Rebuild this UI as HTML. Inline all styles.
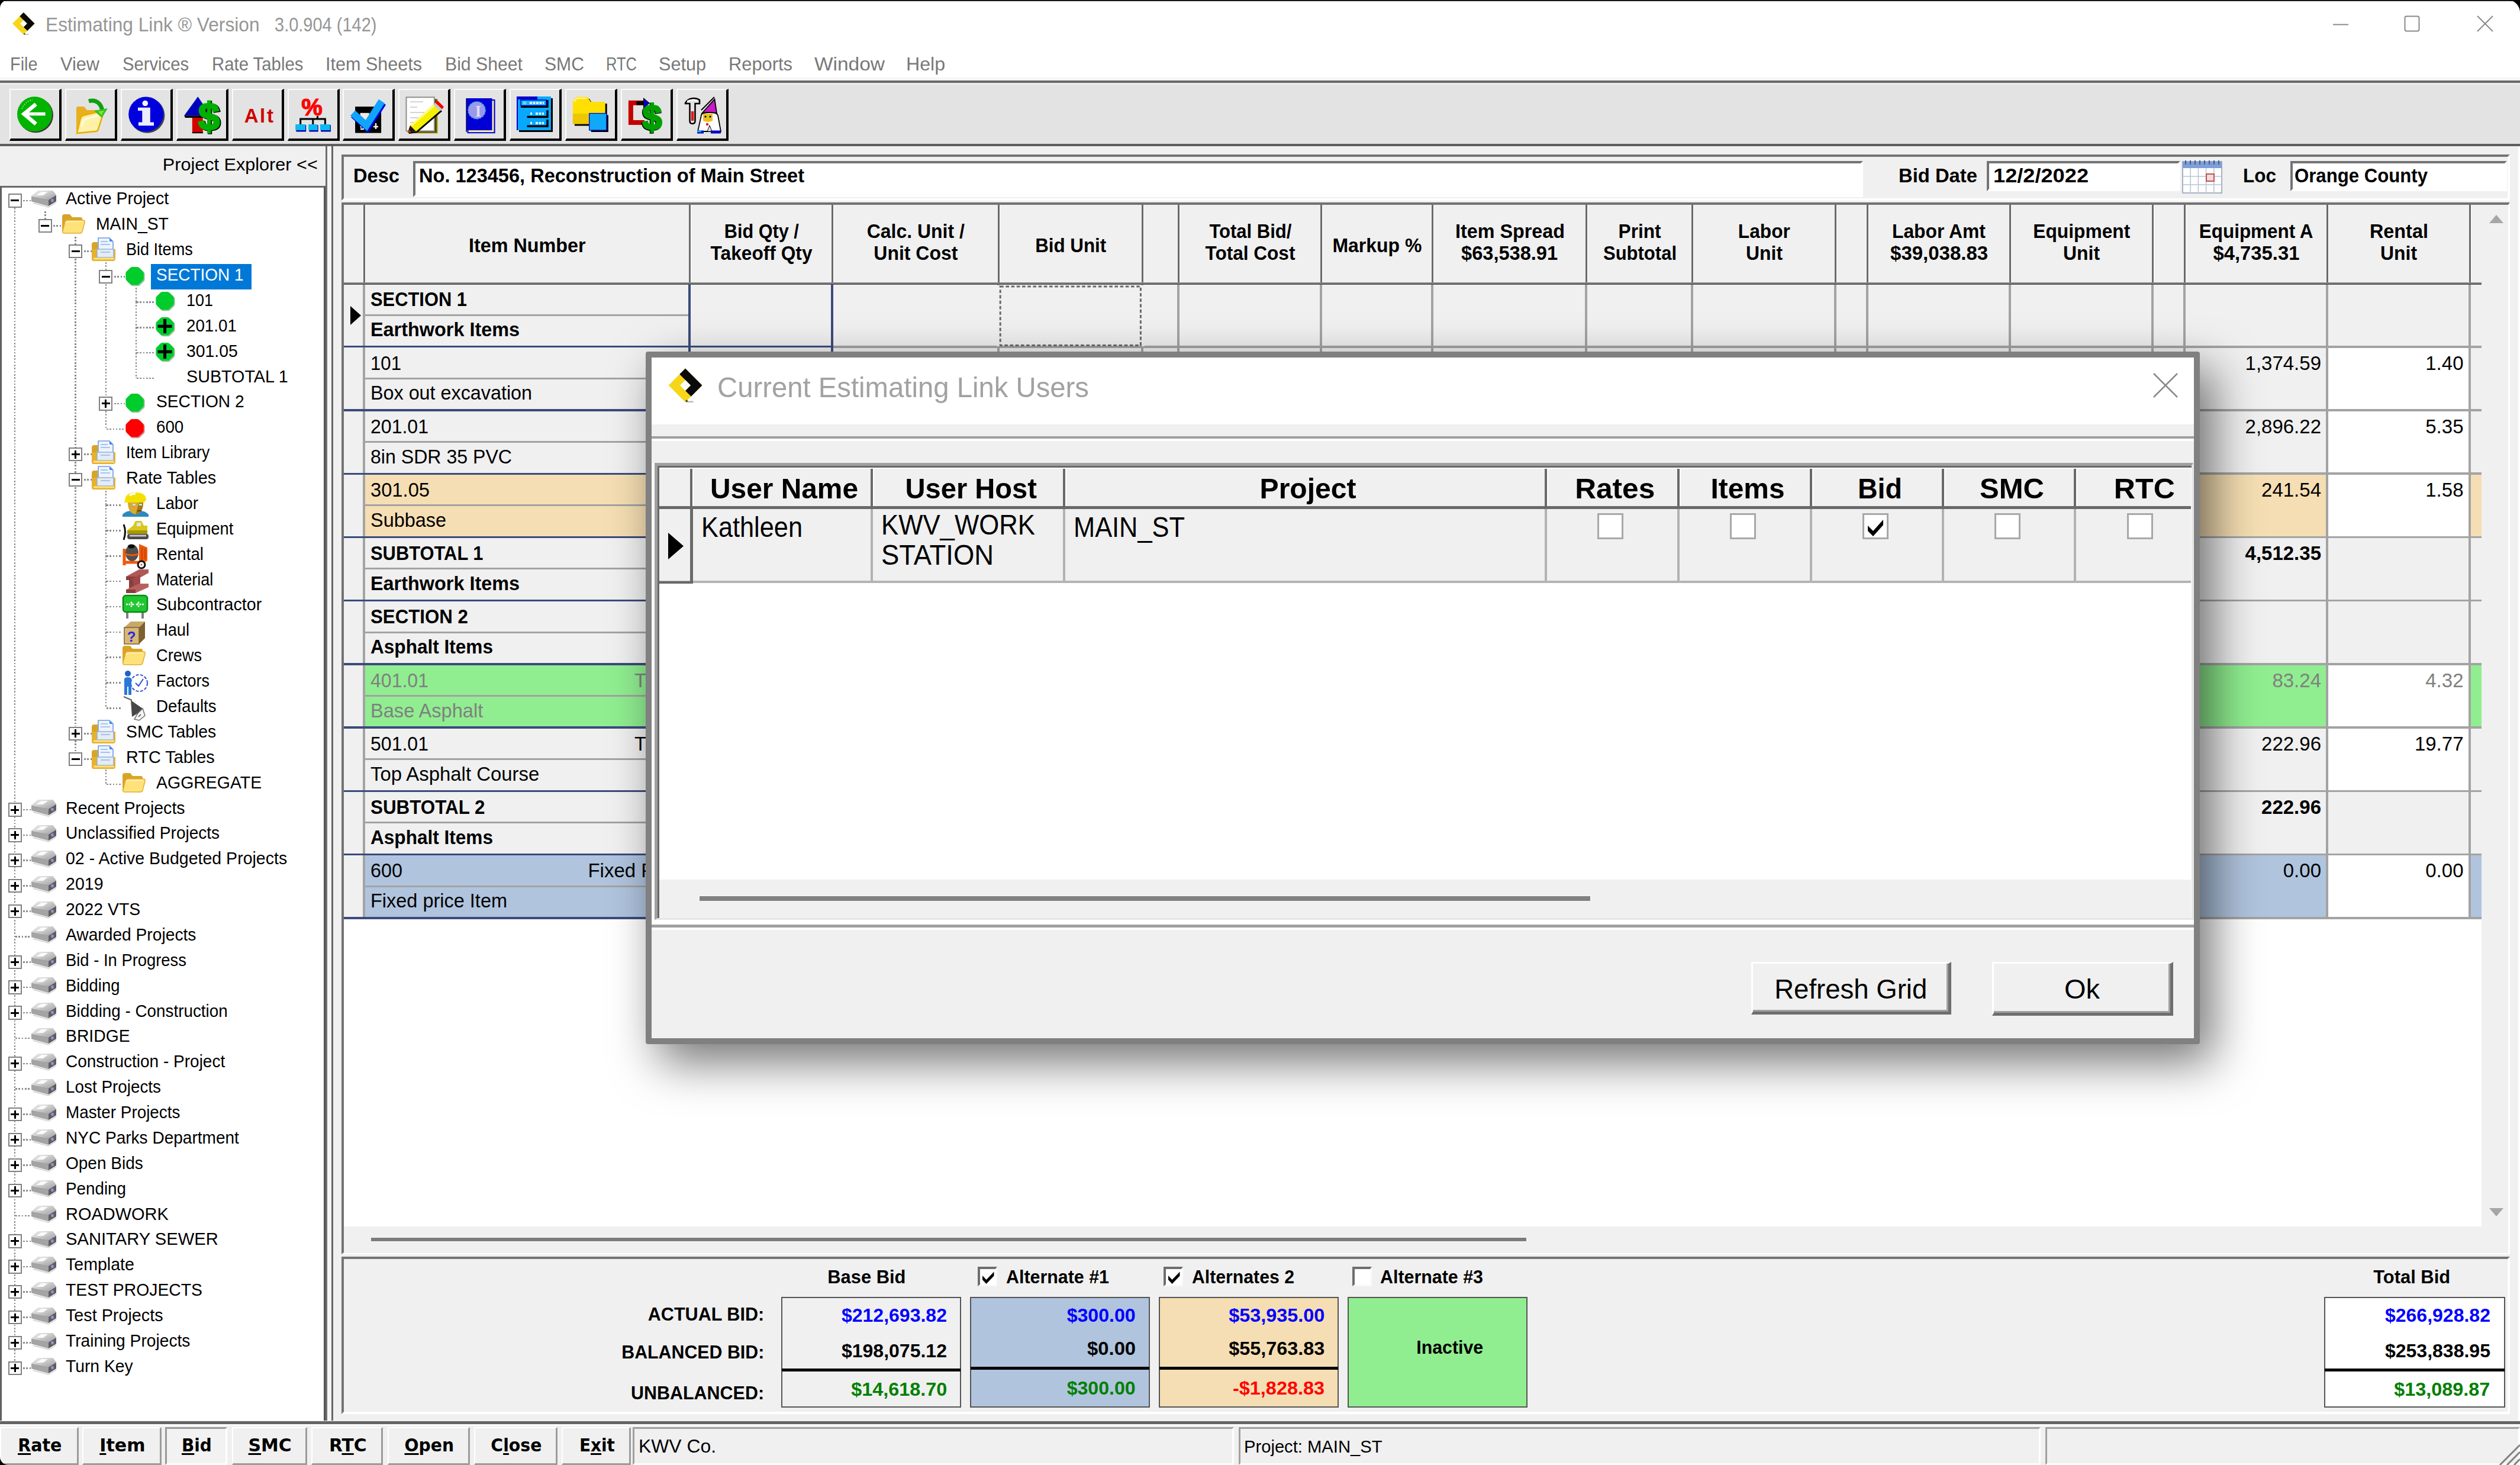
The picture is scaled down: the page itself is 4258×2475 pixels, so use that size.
<!DOCTYPE html>
<html lang="en"><head><meta charset="utf-8"><title>Estimating Link</title>
<style>
html,body{margin:0;padding:0;}
body{width:4258px;height:2475px;position:relative;overflow:hidden;background:#f0f0f0;font-family:'Liberation Sans', sans-serif;}
body div{position:absolute;box-sizing:border-box;}
svg{position:absolute;overflow:visible;}
</style></head><body>
<svg width="0" height="0" style="left:0;top:0"><defs><linearGradient id="dg" x1="0" y1="0" x2="1" y2="1"><stop offset="0" stop-color="#f4f4f4"/><stop offset="1" stop-color="#9c9c9c"/></linearGradient></defs></svg>
<div style="left:0px;top:0px;width:4258px;height:137px;background:#fff;"></div>
<svg style="left:20.4px;top:19.7px" width="39.6" height="39.6" viewBox="0 0 40 40" ><path d="M1.05 20.00L20.00 1.05L38.95 20.00L20.00 38.95Z" fill="#f7d61a"/><path d="M20.00 1.05L38.95 20.00L26.51 32.45L20.00 25.94L25.94 20.00L13.49 7.55Z" fill="#0a0a0a"/><path d="M14.06 20.00L20.00 14.06L25.94 20.00L20.00 25.94Z" fill="#fff"/><path d="M21 38.5H29" stroke="#b8b8b8" stroke-width="1.6"/><circle cx="21.5" cy="37.6" r="1.2" fill="#444"/></svg>
<div style="top:25.99px;font-size:32.5px;line-height:32.5px;height:32.5px;color:#969696;white-space:pre;left:77.00px;transform:scaleX(0.9750);transform-origin:0 0;">Estimating Link ® Version</div>
<div style="top:25.99px;font-size:32.5px;line-height:32.5px;height:32.5px;color:#969696;white-space:pre;left:463.60px;transform:scaleX(0.8922);transform-origin:0 0;">3.0.904 (142)</div>
<svg style="left:3930px;top:15px" width="300" height="50" viewBox="0 0 300 50" fill="none" stroke="#8a8a8a" stroke-width="2"><path d="M12 26.5H38"/><rect x="133.5" y="12.5" width="24" height="25" rx="3"/><path d="M256 12L282 38M282 12L256 38"/></svg>
<div style="top:93.34px;font-size:31.5px;line-height:31.5px;height:31.5px;color:#787878;white-space:pre;left:17.00px;transform:scaleX(0.9161);transform-origin:0 0;">File</div>
<div style="top:93.34px;font-size:31.5px;line-height:31.5px;height:31.5px;color:#787878;white-space:pre;left:102.00px;transform:scaleX(0.9748);transform-origin:0 0;">View</div>
<div style="top:93.34px;font-size:31.5px;line-height:31.5px;height:31.5px;color:#787878;white-space:pre;left:207.00px;transform:scaleX(0.9273);transform-origin:0 0;">Services</div>
<div style="top:93.34px;font-size:31.5px;line-height:31.5px;height:31.5px;color:#787878;white-space:pre;left:357.50px;transform:scaleX(0.9318);transform-origin:0 0;">Rate Tables</div>
<div style="top:93.34px;font-size:31.5px;line-height:31.5px;height:31.5px;color:#787878;white-space:pre;left:550.00px;transform:scaleX(0.9698);transform-origin:0 0;">Item Sheets</div>
<div style="top:93.34px;font-size:31.5px;line-height:31.5px;height:31.5px;color:#787878;white-space:pre;left:752.00px;transform:scaleX(0.9590);transform-origin:0 0;">Bid Sheet</div>
<div style="top:93.34px;font-size:31.5px;line-height:31.5px;height:31.5px;color:#787878;white-space:pre;left:920.00px;transform:scaleX(0.9572);transform-origin:0 0;">SMC</div>
<div style="top:93.34px;font-size:31.5px;line-height:31.5px;height:31.5px;color:#787878;white-space:pre;left:1024.00px;transform:scaleX(0.8104);transform-origin:0 0;">RTC</div>
<div style="top:93.34px;font-size:31.5px;line-height:31.5px;height:31.5px;color:#787878;white-space:pre;left:1113.00px;transform:scaleX(0.9718);transform-origin:0 0;">Setup</div>
<div style="top:93.34px;font-size:31.5px;line-height:31.5px;height:31.5px;color:#787878;white-space:pre;left:1231.00px;transform:scaleX(0.9792);transform-origin:0 0;">Reports</div>
<div style="top:93.34px;font-size:31.5px;line-height:31.5px;height:31.5px;color:#787878;white-space:pre;left:1376.00px;transform:scaleX(1.0622);transform-origin:0 0;">Window</div>
<div style="top:93.34px;font-size:31.5px;line-height:31.5px;height:31.5px;color:#787878;white-space:pre;left:1531.00px;transform:scaleX(1.0188);transform-origin:0 0;">Help</div>
<div style="left:0px;top:131px;width:4258px;height:5.5px;background:#f5f5f5;"></div>
<div style="left:0px;top:136.3px;width:4258px;height:3.9px;background:#686868;"></div>
<div style="left:0px;top:140.2px;width:4258px;height:103px;background:#e3e3e3;"></div>
<div style="left:0px;top:140.2px;width:4258px;height:2.5px;background:#ececec;"></div>
<div style="left:0px;top:243px;width:4258px;height:4px;background:#5e5e5e;"></div>
<div style="left:16.3px;top:150px;width:88px;height:88px;background:#e3e3e3;border-top:2px solid #fbfbfb;border-left:2px solid #fbfbfb;border-right:4px solid #000;border-bottom:4px solid #000;"></div>
<svg style="left:28.3px;top:162px" width="64" height="64" viewBox="0 0 64 64" ><circle cx="32.3" cy="32.6" r="29.7" fill="#000" opacity=".75"/><circle cx="30.5" cy="30.8" r="29.5" fill="#00b400"/><path d="M9 22A24 24 0 0 1 27 6.5" stroke="#7ee07e" stroke-width="2" fill="none" stroke-dasharray="2 2"/><path d="M32.7 14L12.6 30.6L32.7 47.4" stroke="#fff" stroke-width="6.5" fill="none"/><path d="M13 30.6H48.6" stroke="#fff" stroke-width="5.5"/></svg>
<div style="left:110.15px;top:150px;width:88px;height:88px;background:#e3e3e3;border-top:2px solid #fbfbfb;border-left:2px solid #fbfbfb;border-right:4px solid #000;border-bottom:4px solid #000;"></div>
<svg style="left:122.15px;top:162px" width="64" height="64" viewBox="0 0 64 64" ><path d="M7 21Q7 18 10 18H20L25 24H44V60H7Z" fill="#e8b020"/><path d="M8 63L14 38Q15 34 19 33L48 26Q54 25 52 31L44 56Q43 60 39 60Z" fill="#fff2a8" stroke="#e6b000" stroke-width="2.5"/><path d="M16 52L20 40L44 33" stroke="#fffbe0" stroke-width="3" fill="none"/><path d="M28 9C40 5 50 13 51 27" stroke="#10a010" stroke-width="7" fill="none"/><path d="M37 25L60 21L50 37Z" fill="#30c030"/><path d="M44 26L54 25L49 33Z" fill="#90e020"/></svg>
<div style="left:204px;top:150px;width:88px;height:88px;background:#e3e3e3;border-top:2px solid #fbfbfb;border-left:2px solid #fbfbfb;border-right:4px solid #000;border-bottom:4px solid #000;"></div>
<svg style="left:216px;top:162px" width="64" height="64" viewBox="0 0 64 64" ><circle cx="32.7" cy="33" r="29.7" fill="#000" opacity=".7"/><circle cx="30.7" cy="31" r="29.5" fill="#0000dc"/><circle cx="29.3" cy="12.5" r="4.8" fill="#f4f4ff"/><path d="M17 19.8H37.8V44.6H44V50.2H18V44.6H24.3V25H17Z" fill="#ececff"/></svg>
<div style="left:297.85px;top:150px;width:88px;height:88px;background:#e3e3e3;border-top:2px solid #fbfbfb;border-left:2px solid #fbfbfb;border-right:4px solid #000;border-bottom:4px solid #000;"></div>
<svg style="left:309.85px;top:162px" width="64" height="64" viewBox="0 0 64 64" ><path d="M24.4 1.2L46 33.3H1.2Z" fill="#0000c0"/><path d="M1.2 33.3H46V36.9H3Z" fill="#000"/><rect x="14.8" y="36.9" width="18" height="25.3" fill="#d40000"/><path d="M14.8 62.2H33" stroke="#000" stroke-width="2"/><text x="25" y="56.7" font-family="Liberation Sans, sans-serif" font-weight="bold" font-size="65" fill="#000" stroke="#000" stroke-width="3.5" transform="translate(1.5,1.5)">$</text><text x="25" y="56.7" font-family="Liberation Sans, sans-serif" font-weight="bold" font-size="65" fill="#00b000" stroke="#00b000" stroke-width="3">$</text></svg>
<div style="left:391.7px;top:150px;width:88px;height:88px;background:#e3e3e3;border-top:2px solid #fbfbfb;border-left:2px solid #fbfbfb;border-right:4px solid #000;border-bottom:4px solid #000;"></div>
<svg style="left:403.7px;top:162px" width="64" height="64" viewBox="0 0 64 64" ><text x="33.3" y="44.6" text-anchor="middle" font-family="Liberation Sans, sans-serif" font-weight="bold" font-size="33" letter-spacing="2.6" fill="#d00000" transform="translate(1.3,0)">Alt</text></svg>
<div style="left:485.55px;top:150px;width:88px;height:88px;background:#e3e3e3;border-top:2px solid #fbfbfb;border-left:2px solid #fbfbfb;border-right:4px solid #000;border-bottom:4px solid #000;"></div>
<svg style="left:497.55px;top:162px" width="64" height="64" viewBox="0 0 64 64" ><text x="29" y="32.5" text-anchor="middle" font-family="Liberation Sans, sans-serif" font-weight="bold" font-size="40" fill="#ff0000" stroke="#ff0000" stroke-width="1.2">%</text><path d="M38.5 34V39M9.7 49V39H51.4V49M30.8 39V49" stroke="#000" stroke-width="3" fill="none"/><rect x="2.4" y="49.2" width="16.8" height="11.3" fill="#0000b0"/><rect x="24.4" y="49.2" width="15.3" height="11.3" fill="#0000b0"/><rect x="44.1" y="49.2" width="16.9" height="11.3" fill="#0000b0"/><rect x="1.2" y="48" width="16.8" height="10" fill="#10b8f0"/><rect x="23.2" y="48" width="15.3" height="10" fill="#10b8f0"/><rect x="42.9" y="48" width="16.9" height="10" fill="#10b8f0"/></svg>
<div style="left:579.4px;top:150px;width:88px;height:88px;background:#e3e3e3;border-top:2px solid #fbfbfb;border-left:2px solid #fbfbfb;border-right:4px solid #000;border-bottom:4px solid #000;"></div>
<svg style="left:591.4px;top:162px" width="64" height="64" viewBox="0 0 64 64" ><rect x="9.1" y="18.1" width="44" height="44.5" fill="#000"/><rect x="17.6" y="28.8" width="15.2" height="24.8" fill="#f0e8e0"/><path d="M5 29L28 50L54 9" stroke="#0000e0" stroke-width="13" fill="none" transform="translate(1.5,2.5)"/><path d="M44 46V56M40 52H48" stroke="#f0f0f0" stroke-width="2.5"/><path d="M18 56H24" stroke="#f0f0f0" stroke-width="2.5"/><path d="M5 29L28 50L54 9" stroke="#10a4ff" stroke-width="12" fill="none"/></svg>
<div style="left:673.25px;top:150px;width:88px;height:88px;background:#e3e3e3;border-top:2px solid #fbfbfb;border-left:2px solid #fbfbfb;border-right:4px solid #000;border-bottom:4px solid #000;"></div>
<svg style="left:685.25px;top:162px" width="64" height="64" viewBox="0 0 64 64" ><rect x="4.5" y="5.3" width="50" height="58" fill="#a09000"/><rect x="4.5" y="5.3" width="48" height="56.5" fill="#000" opacity=".55"/><rect x="1.5" y="2.3" width="47.4" height="57" fill="#fff" stroke="#909090" stroke-width="2"/><path d="M8 10H30M8 19H20M8 28H32M8 37H26M8 45H22" stroke="#d4d4d4" stroke-width="2"/><path d="M3.8 62L8 50L49 13L60 24L18 60Z" fill="#000" transform="translate(2,2)"/><path d="M3.8 62L8 50L49 13L60 24L18 60Z" fill="#f4f000"/><path d="M10 50L50 15" stroke="#fffc80" stroke-width="3"/><path d="M47 15L50.5 11.5L62 22.5L58 26Z" fill="#c8c8c8"/><path d="M50.5 11.5L54 7.5L65 18.5L62 22.5Z" fill="#f00000"/><path d="M3.8 62L8 50L18 60Z" fill="#181818"/><path d="M3.8 62L6 57L10 61Z" fill="#e02020"/></svg>
<div style="left:767.1px;top:150px;width:88px;height:88px;background:#e3e3e3;border-top:2px solid #fbfbfb;border-left:2px solid #fbfbfb;border-right:4px solid #000;border-bottom:4px solid #000;"></div>
<svg style="left:779.1px;top:162px" width="64" height="64" viewBox="0 0 64 64" ><rect x="10.5" y="6" width="47.1" height="57.2" fill="#0000d0"/><rect x="12.5" y="8" width="43" height="53.2" fill="#fbeeb0"/><rect x="9.1" y="4" width="43.4" height="54.1" fill="#0000d4"/><path d="M9.1 4V61" stroke="#000060" stroke-width="1.5"/><circle cx="26.6" cy="24.3" r="14.6" fill="#9c98e8"/><circle cx="26.6" cy="24.3" r="14.6" fill="none" stroke="#20a0f0" stroke-width="1.5" stroke-dasharray="3 2"/><text x="29" y="35" text-anchor="middle" font-family="Liberation Serif, serif" font-weight="bold" font-size="27" fill="#dcdcfc">I</text></svg>
<div style="left:860.95px;top:150px;width:88px;height:88px;background:#e3e3e3;border-top:2px solid #fbfbfb;border-left:2px solid #fbfbfb;border-right:4px solid #000;border-bottom:4px solid #000;"></div>
<svg style="left:872.95px;top:162px" width="64" height="64" viewBox="0 0 64 64" ><rect x="4" y="4" width="57" height="57" fill="#000"/><rect x="1" y="1" width="57" height="57" fill="#08a8ff"/><rect x="1" y="1" width="34" height="5" fill="#0000d0"/><path d="M1 1V58" stroke="#0000d0" stroke-width="2"/><path d="M7 18.2H52V7" stroke="#000" stroke-width="3.5" fill="none"/><rect x="7" y="7" width="43" height="9.5" fill="#18b4ff" stroke="#0000b8" stroke-width="1.5"/><path d="M17.5 35.5H52V24.2M17.5 51.2H52V40" stroke="#000" stroke-width="3.5" fill="none"/><rect x="11" y="9.5" width="5" height="5" fill="#60e0e0"/><path d="M22 12H46" stroke="#d0f4ff" stroke-width="4" stroke-dasharray="4 1.5"/><path d="M23 30H26M32 30H46M23 46H26M32 46H46" stroke="#d0f4ff" stroke-width="4" stroke-dasharray="4 1.5"/></svg>
<div style="left:954.8px;top:150px;width:88px;height:88px;background:#e3e3e3;border-top:2px solid #fbfbfb;border-left:2px solid #fbfbfb;border-right:4px solid #000;border-bottom:4px solid #000;"></div>
<svg style="left:966.8px;top:162px" width="64" height="64" viewBox="0 0 64 64" ><path d="M3.9 12L9.9 4.7H28.7L34 13H58.7V50.5H3.9Z" fill="#000"/><path d="M0.9 9L6.9 1.7H25.7L31 10H55.7V47.5H0.9Z" fill="#ffe000"/><path d="M0.9 30H55.7V47.5H0.9Z" fill="#e0b800" opacity=".6"/><path d="M3 10L7.5 4H24" stroke="#fff8a0" stroke-width="2" fill="none"/><rect x="31.7" y="32.5" width="29.2" height="28.5" fill="#000"/><rect x="28.7" y="29.5" width="29.2" height="28.5" fill="#10a8f8"/><rect x="28.7" y="29.5" width="29.2" height="28.5" fill="none" stroke="#0000c0" stroke-width="1.2"/></svg>
<div style="left:1048.65px;top:150px;width:88px;height:88px;background:#e3e3e3;border-top:2px solid #fbfbfb;border-left:2px solid #fbfbfb;border-right:4px solid #000;border-bottom:4px solid #000;"></div>
<svg style="left:1060.65px;top:162px" width="64" height="64" viewBox="0 0 64 64" ><path d="M27.9 11.7H4.9V45H27.9" stroke="#c40000" stroke-width="8" fill="none"/><path d="M14.4 9H26V3L37 12.2L26 21.5V15.5H14.4Z" fill="#000"/><path d="M27 5.5L36.5 12.2L27 19Z" fill="#0000c8"/><text x="24.5" y="57.3" font-family="Liberation Sans, sans-serif" font-weight="bold" font-size="59" fill="#000" stroke="#000" stroke-width="3.5" transform="translate(-1,1.2)">$</text><text x="24.5" y="57.3" font-family="Liberation Sans, sans-serif" font-weight="bold" font-size="59" fill="#00a000" stroke="#00a000" stroke-width="3">$</text></svg>
<div style="left:1142.5px;top:150px;width:88px;height:88px;background:#e3e3e3;border-top:2px solid #fbfbfb;border-left:2px solid #fbfbfb;border-right:4px solid #000;border-bottom:4px solid #000;"></div>
<svg style="left:1154.5px;top:162px" width="64" height="64" viewBox="0 0 64 64" ><path d="M3 12C8 3 20 2 27 7V13H19.5V42Q19.5 47 15 47Q10.5 47 10.5 42V13H3Z" fill="#e4e4e4" stroke="#000" stroke-width="2.5"/><rect x="12.8" y="26" width="4.6" height="16" fill="#e01818"/><path d="M6 9Q14 5 24 8" stroke="#fff" stroke-width="2" fill="none"/><path d="M31.5 29L52.5 5.5L56 29Z" fill="#c818c8" stroke="#000" stroke-width="1.8"/><path d="M30 24L52 2" stroke="#000" stroke-width="2"/><path d="M30 33Q30 28 44 28Q57 28 58 33L63 60H24Z" fill="#fff" stroke="#000" stroke-width="1.8"/><path d="M33 30H49V42Q41 46 33 42Z" fill="#e8c020"/><circle cx="37" cy="35" r="1.6" fill="#000"/><circle cx="45" cy="35" r="1.6" fill="#000"/><circle cx="40" cy="48" r="2.2" fill="#f01010"/><path d="M40 60L44 50L48 60Z" fill="#e4e4e4" stroke="#000" stroke-width="1"/><path d="M23 61H34M46 61H63" stroke="#0000c8" stroke-width="5"/><path d="M23 60H30" stroke="#10a8f0" stroke-width="3"/></svg>
<div style="left:0px;top:247px;width:553px;height:2155px;background:#f0f0f0;"></div>
<div style="top:262.61px;font-size:30px;line-height:30px;height:30px;color:#000;white-space:pre;right:3721.00px;transform:scaleX(1.0203);transform-origin:100% 0;">Project Explorer &lt;&lt;</div>
<div style="left:0px;top:313.5px;width:549.8px;height:2088.5px;background:#fff;border-top:3.2px solid #6a6a6a;border-left:3px solid #606060;border-right:3.1px solid #555;"></div>
<div style="left:549.6px;top:247px;width:3px;height:2155px;background:#6e6e6e;"></div>
<div style="left:552.6px;top:247px;width:7.2px;height:2155px;background:#f5f5f5;"></div>
<div style="left:559.8px;top:247px;width:3698.2px;height:2155px;background:#f0f0f0;border-left:3.5px solid #666;border-right:3px solid #fff;"></div>
<div style="left:577px;top:261px;width:3664px;height:78px;border-top:4px solid #747474;border-left:4px solid #747474;border-bottom:4px solid #ffffff;border-right:4px solid #ffffff;"></div>
<div style="top:280.37px;font-size:33px;line-height:33px;height:33px;color:#000;white-space:pre;font-weight:bold;left:597.00px;transform:scaleX(0.9887);transform-origin:0 0;">Desc</div>
<div style="left:698px;top:272px;width:2450px;height:61px;background:#fff;border-top:4px solid #747474;border-left:4px solid #747474;border-bottom:4px solid #ffffff;border-right:4px solid #ffffff;"></div>
<div style="top:280.37px;font-size:33px;line-height:33px;height:33px;color:#000;white-space:pre;font-weight:bold;left:707.50px;transform:scaleX(0.9861);transform-origin:0 0;">No. 123456, Reconstruction of Main Street</div>
<div style="top:279.87px;font-size:33px;line-height:33px;height:33px;color:#000;white-space:pre;font-weight:bold;left:3208.30px;transform:scaleX(0.9936);transform-origin:0 0;">Bid Date</div>
<div style="left:3357px;top:271.5px;width:327px;height:51px;background:#fff;border-top:4px solid #747474;border-left:4px solid #747474;border-bottom:4px solid #ffffff;border-right:4px solid #ffffff;"></div>
<div style="top:279.57px;font-size:33px;line-height:33px;height:33px;color:#000;white-space:pre;font-weight:bold;left:3368.00px;transform:scaleX(1.0967);transform-origin:0 0;">12/2/2022</div>
<svg style="left:3687px;top:270px" width="68" height="57" viewBox="0 0 68 57" ><rect x="1" y="3" width="66" height="53" fill="#fff" stroke="#8c9bb5" stroke-width="1.5"/><rect x="1" y="3" width="66" height="11" fill="#7f9fd9"/><path d="M6 1v7" stroke="#445a8a" stroke-width="2"/><path d="M14 1v7" stroke="#445a8a" stroke-width="2"/><path d="M22 1v7" stroke="#445a8a" stroke-width="2"/><path d="M30 1v7" stroke="#445a8a" stroke-width="2"/><path d="M38 1v7" stroke="#445a8a" stroke-width="2"/><path d="M46 1v7" stroke="#445a8a" stroke-width="2"/><path d="M54 1v7" stroke="#445a8a" stroke-width="2"/><path d="M62 1v7" stroke="#445a8a" stroke-width="2"/><path d="M14.2 14V56" stroke="#b7c3d6" stroke-width="1.5"/><path d="M27.4 14V56" stroke="#b7c3d6" stroke-width="1.5"/><path d="M40.6 14V56" stroke="#b7c3d6" stroke-width="1.5"/><path d="M53.8 14V56" stroke="#b7c3d6" stroke-width="1.5"/><path d="M1 28H67" stroke="#b7c3d6" stroke-width="1.5"/><path d="M1 42H67" stroke="#b7c3d6" stroke-width="1.5"/><rect x="41" y="24" width="13" height="12" fill="#f6dada" stroke="#b55" stroke-width="2"/></svg>
<div style="top:280.37px;font-size:33px;line-height:33px;height:33px;color:#000;white-space:pre;font-weight:bold;left:3790.00px;transform:scaleX(0.9545);transform-origin:0 0;">Loc</div>
<div style="left:3870px;top:271.5px;width:366px;height:51px;background:#fff;border-top:4px solid #747474;border-left:4px solid #747474;border-bottom:4px solid #ffffff;border-right:4px solid #ffffff;"></div>
<div style="top:279.57px;font-size:33px;line-height:33px;height:33px;color:#000;white-space:pre;font-weight:bold;left:3877.00px;transform:scaleX(0.9440);transform-origin:0 0;">Orange County</div>
<div style="left:23.9px;top:350.9px;width:2.6px;height:1960.48px;background:repeating-linear-gradient(to bottom,#8c8c8c 0,#8c8c8c 2.6px,transparent 2.6px,transparent 5.3px);"></div>
<div style="left:75.1px;top:356.9px;width:2.6px;height:12.88px;background:repeating-linear-gradient(to bottom,#8c8c8c 0,#8c8c8c 2.6px,transparent 2.6px,transparent 5.3px);"></div>
<div style="left:126.3px;top:399.78px;width:2.6px;height:12.88px;background:repeating-linear-gradient(to bottom,#8c8c8c 0,#8c8c8c 2.6px,transparent 2.6px,transparent 5.3px);"></div>
<div style="left:177.5px;top:442.66px;width:2.6px;height:12.88px;background:repeating-linear-gradient(to bottom,#8c8c8c 0,#8c8c8c 2.6px,transparent 2.6px,transparent 5.3px);"></div>
<div style="left:228.7px;top:485.54px;width:2.6px;height:24.88px;background:repeating-linear-gradient(to bottom,#8c8c8c 0,#8c8c8c 2.6px,transparent 2.6px,transparent 5.3px);"></div>
<div style="left:228.7px;top:510.42px;width:2.6px;height:42.88px;background:repeating-linear-gradient(to bottom,#8c8c8c 0,#8c8c8c 2.6px,transparent 2.6px,transparent 5.3px);"></div>
<div style="left:228.7px;top:553.3px;width:2.6px;height:42.88px;background:repeating-linear-gradient(to bottom,#8c8c8c 0,#8c8c8c 2.6px,transparent 2.6px,transparent 5.3px);"></div>
<div style="left:228.7px;top:596.18px;width:2.6px;height:42.88px;background:repeating-linear-gradient(to bottom,#8c8c8c 0,#8c8c8c 2.6px,transparent 2.6px,transparent 5.3px);"></div>
<div style="left:177.5px;top:479.54px;width:2.6px;height:190.4px;background:repeating-linear-gradient(to bottom,#8c8c8c 0,#8c8c8c 2.6px,transparent 2.6px,transparent 5.3px);"></div>
<div style="left:177.5px;top:693.94px;width:2.6px;height:30.88px;background:repeating-linear-gradient(to bottom,#8c8c8c 0,#8c8c8c 2.6px,transparent 2.6px,transparent 5.3px);"></div>
<div style="left:126.3px;top:436.66px;width:2.6px;height:319.04px;background:repeating-linear-gradient(to bottom,#8c8c8c 0,#8c8c8c 2.6px,transparent 2.6px,transparent 5.3px);"></div>
<div style="left:126.3px;top:779.7px;width:2.6px;height:18.88px;background:repeating-linear-gradient(to bottom,#8c8c8c 0,#8c8c8c 2.6px,transparent 2.6px,transparent 5.3px);"></div>
<div style="left:177.5px;top:828.58px;width:2.6px;height:24.88px;background:repeating-linear-gradient(to bottom,#8c8c8c 0,#8c8c8c 2.6px,transparent 2.6px,transparent 5.3px);"></div>
<div style="left:177.5px;top:853.46px;width:2.6px;height:42.88px;background:repeating-linear-gradient(to bottom,#8c8c8c 0,#8c8c8c 2.6px,transparent 2.6px,transparent 5.3px);"></div>
<div style="left:177.5px;top:896.34px;width:2.6px;height:42.88px;background:repeating-linear-gradient(to bottom,#8c8c8c 0,#8c8c8c 2.6px,transparent 2.6px,transparent 5.3px);"></div>
<div style="left:177.5px;top:939.22px;width:2.6px;height:42.88px;background:repeating-linear-gradient(to bottom,#8c8c8c 0,#8c8c8c 2.6px,transparent 2.6px,transparent 5.3px);"></div>
<div style="left:177.5px;top:982.1px;width:2.6px;height:42.88px;background:repeating-linear-gradient(to bottom,#8c8c8c 0,#8c8c8c 2.6px,transparent 2.6px,transparent 5.3px);"></div>
<div style="left:177.5px;top:1024.98px;width:2.6px;height:42.88px;background:repeating-linear-gradient(to bottom,#8c8c8c 0,#8c8c8c 2.6px,transparent 2.6px,transparent 5.3px);"></div>
<div style="left:177.5px;top:1067.86px;width:2.6px;height:42.88px;background:repeating-linear-gradient(to bottom,#8c8c8c 0,#8c8c8c 2.6px,transparent 2.6px,transparent 5.3px);"></div>
<div style="left:177.5px;top:1110.74px;width:2.6px;height:42.88px;background:repeating-linear-gradient(to bottom,#8c8c8c 0,#8c8c8c 2.6px,transparent 2.6px,transparent 5.3px);"></div>
<div style="left:177.5px;top:1153.62px;width:2.6px;height:42.88px;background:repeating-linear-gradient(to bottom,#8c8c8c 0,#8c8c8c 2.6px,transparent 2.6px,transparent 5.3px);"></div>
<div style="left:126.3px;top:822.58px;width:2.6px;height:404.8px;background:repeating-linear-gradient(to bottom,#8c8c8c 0,#8c8c8c 2.6px,transparent 2.6px,transparent 5.3px);"></div>
<div style="left:126.3px;top:1251.38px;width:2.6px;height:18.88px;background:repeating-linear-gradient(to bottom,#8c8c8c 0,#8c8c8c 2.6px,transparent 2.6px,transparent 5.3px);"></div>
<div style="left:177.5px;top:1300.26px;width:2.6px;height:24.88px;background:repeating-linear-gradient(to bottom,#8c8c8c 0,#8c8c8c 2.6px,transparent 2.6px,transparent 5.3px);"></div>
<div style="left:39.2px;top:337.6px;width:13.4px;height:2.6px;background:repeating-linear-gradient(to right,#8c8c8c 0,#8c8c8c 2.6px,transparent 2.6px,transparent 5.3px);"></div>
<div style="left:13.5px;top:327.2px;width:23.4px;height:23.4px;background:#fff;border:2.4px solid #808080;"></div>
<div style="left:18.2px;top:337.4px;width:14px;height:3px;background:#000;"></div>
<svg style="left:52.1px;top:318.9px" width="44" height="44" viewBox="0 0 44 44" ><path d="M1 13L13 3H37L43 11V21L30 29L1 21Z" fill="#7a7a7a"/><path d="M1 13L13 3H37L43 11L30 19Z" fill="url(#dg)"/><path d="M1 13L30 19V29L1 21Z" fill="#a4a4a4"/><path d="M30 19L43 11V21L30 29Z" fill="#5e5e5e"/><ellipse cx="36.5" cy="19.5" rx="2.4" ry="2.8" fill="#8c94e0"/><path d="M9 11L18 5H29L21 11Z" fill="#fff" opacity=".9"/><path d="M4 24L30 31L43 23" stroke="#c8c8c8" stroke-width="2" fill="none" opacity=".7"/></svg>
<div style="top:321.39px;font-size:28.6px;line-height:28.6px;height:28.6px;color:#000;white-space:pre;left:110.60px;transform:scaleX(0.9960);transform-origin:0 0;">Active Project</div>
<div style="left:90.4px;top:380.48px;width:13.4px;height:2.6px;background:repeating-linear-gradient(to right,#8c8c8c 0,#8c8c8c 2.6px,transparent 2.6px,transparent 5.3px);"></div>
<div style="left:64.7px;top:370.08px;width:23.4px;height:23.4px;background:#fff;border:2.4px solid #808080;"></div>
<div style="left:69.4px;top:380.28px;width:14px;height:3px;background:#000;"></div>
<svg style="left:101.8px;top:356.28px" width="44" height="44" viewBox="0 0 44 44" ><path d="M3 10Q3 6 7 6H16L20 11H34Q37 11 37 14V34Q37 38 33 38H7Q3 38 3 34Z" fill="#d8a428"/><path d="M6 38Q3 38 4 34L8 19Q9 16 12 16H38Q42 16 41 20L37 35Q36 38 33 38Z" fill="#ffe27a" stroke="#e2ae30" stroke-width="1.5"/><path d="M9 21Q10 18 13 18H37" stroke="#fff6c8" stroke-width="1.5" fill="none"/></svg>
<div style="top:364.27px;font-size:28.6px;line-height:28.6px;height:28.6px;color:#000;white-space:pre;left:161.80px;transform:scaleX(0.9917);transform-origin:0 0;">MAIN_ST</div>
<div style="left:141.6px;top:423.36px;width:13.4px;height:2.6px;background:repeating-linear-gradient(to right,#8c8c8c 0,#8c8c8c 2.6px,transparent 2.6px,transparent 5.3px);"></div>
<div style="left:115.9px;top:412.96px;width:23.4px;height:23.4px;background:#fff;border:2.4px solid #808080;"></div>
<div style="left:120.6px;top:423.16px;width:14px;height:3px;background:#000;"></div>
<svg style="left:153px;top:399.16px" width="44" height="44" viewBox="0 0 44 44" ><path d="M2 14Q2 10 6 10H12V42H6Q2 42 2 38Z" fill="#d8a428"/><path d="M2 22H42V38Q42 42 38 42H6Q2 42 2 38Z" fill="#e6b030"/><path d="M13 3H32L38 9V30H13Z" fill="#eef4fc" stroke="#6f9be0" stroke-width="1.6"/><path d="M32 3V9H38Z" fill="#3d8bf0"/><path d="M17 9H29M17 14H33" stroke="#a4c4f4" stroke-width="2"/><rect x="11" y="22" width="28" height="14" fill="#e4ecf4" stroke="#9ab0cc" stroke-width="1.5"/><path d="M17 27H33" stroke="#a4c4f4" stroke-width="2"/><path d="M5 38H40" stroke="#ffe27a" stroke-width="3"/></svg>
<div style="top:407.15px;font-size:28.6px;line-height:28.6px;height:28.6px;color:#000;white-space:pre;left:213.00px;transform:scaleX(0.9456);transform-origin:0 0;">Bid Items</div>
<div style="left:192.8px;top:466.24px;width:18.4px;height:2.6px;background:repeating-linear-gradient(to right,#8c8c8c 0,#8c8c8c 2.6px,transparent 2.6px,transparent 5.3px);"></div>
<div style="left:167.1px;top:455.84px;width:23.4px;height:23.4px;background:#fff;border:2.4px solid #808080;"></div>
<div style="left:171.8px;top:466.04px;width:14px;height:3px;background:#000;"></div>
<svg style="left:206.7px;top:445.54px" width="44" height="44" viewBox="0 0 44 44" ><path d="M15 1H27Q29 1 31 3L39 11Q41 13 41 15V27Q41 29 39 31L31 39Q29 41 27 41H15Q13 41 11 39L3 31Q1 29 1 27V15Q1 13 3 11L11 3Q13 1 15 1Z" fill="#0a7a1a" transform="translate(5.6,5.2) scale(.78)" opacity=".45"/><path d="M15 1H27Q29 1 31 3L39 11Q41 13 41 15V27Q41 29 39 31L31 39Q29 41 27 41H15Q13 41 11 39L3 31Q1 29 1 27V15Q1 13 3 11L11 3Q13 1 15 1Z" fill="#00cc2c" transform="translate(4.6,4.2) scale(.76)"/></svg>
<div style="left:254.7px;top:445.54px;width:170px;height:43px;background:#0078d7;"></div>
<div style="top:450.03px;font-size:28.6px;line-height:28.6px;height:28.6px;color:#fff;white-space:pre;left:264.20px;transform:scaleX(0.9772);transform-origin:0 0;">SECTION 1</div>
<div style="left:231px;top:509.12px;width:31.4px;height:2.6px;background:repeating-linear-gradient(to right,#8c8c8c 0,#8c8c8c 2.6px,transparent 2.6px,transparent 5.3px);"></div>
<svg style="left:257.9px;top:488.42px" width="44" height="44" viewBox="0 0 44 44" ><path d="M15 1H27Q29 1 31 3L39 11Q41 13 41 15V27Q41 29 39 31L31 39Q29 41 27 41H15Q13 41 11 39L3 31Q1 29 1 27V15Q1 13 3 11L11 3Q13 1 15 1Z" fill="#0a7a1a" transform="translate(5.6,5.2) scale(.78)" opacity=".45"/><path d="M15 1H27Q29 1 31 3L39 11Q41 13 41 15V27Q41 29 39 31L31 39Q29 41 27 41H15Q13 41 11 39L3 31Q1 29 1 27V15Q1 13 3 11L11 3Q13 1 15 1Z" fill="#00cc2c" transform="translate(4.6,4.2) scale(.76)"/></svg>
<div style="top:492.91px;font-size:28.6px;line-height:28.6px;height:28.6px;color:#000;white-space:pre;left:315.40px;transform:scaleX(0.9432);transform-origin:0 0;">101</div>
<div style="left:231px;top:552px;width:31.4px;height:2.6px;background:repeating-linear-gradient(to right,#8c8c8c 0,#8c8c8c 2.6px,transparent 2.6px,transparent 5.3px);"></div>
<svg style="left:257.9px;top:531.3px" width="44" height="44" viewBox="0 0 44 44" ><path d="M15 1H27Q29 1 31 3L39 11Q41 13 41 15V27Q41 29 39 31L31 39Q29 41 27 41H15Q13 41 11 39L3 31Q1 29 1 27V15Q1 13 3 11L11 3Q13 1 15 1Z" fill="#0a7a1a" transform="translate(5.6,5.2) scale(.78)" opacity=".45"/><path d="M15 1H27Q29 1 31 3L39 11Q41 13 41 15V27Q41 29 39 31L31 39Q29 41 27 41H15Q13 41 11 39L3 31Q1 29 1 27V15Q1 13 3 11L11 3Q13 1 15 1Z" fill="#00cc2c" transform="translate(4.6,4.2) scale(.76)"/><path d="M20.6 8.1V32.1M8.5 20.2H32.5" stroke="#000" stroke-width="5"/></svg>
<div style="top:535.79px;font-size:28.6px;line-height:28.6px;height:28.6px;color:#000;white-space:pre;left:315.40px;transform:scaleX(0.9696);transform-origin:0 0;">201.01</div>
<div style="left:231px;top:594.88px;width:31.4px;height:2.6px;background:repeating-linear-gradient(to right,#8c8c8c 0,#8c8c8c 2.6px,transparent 2.6px,transparent 5.3px);"></div>
<svg style="left:257.9px;top:574.18px" width="44" height="44" viewBox="0 0 44 44" ><path d="M15 1H27Q29 1 31 3L39 11Q41 13 41 15V27Q41 29 39 31L31 39Q29 41 27 41H15Q13 41 11 39L3 31Q1 29 1 27V15Q1 13 3 11L11 3Q13 1 15 1Z" fill="#0a7a1a" transform="translate(5.6,5.2) scale(.78)" opacity=".45"/><path d="M15 1H27Q29 1 31 3L39 11Q41 13 41 15V27Q41 29 39 31L31 39Q29 41 27 41H15Q13 41 11 39L3 31Q1 29 1 27V15Q1 13 3 11L11 3Q13 1 15 1Z" fill="#00cc2c" transform="translate(4.6,4.2) scale(.76)"/><path d="M20.6 8.1V32.1M8.5 20.2H32.5" stroke="#000" stroke-width="5"/></svg>
<div style="top:578.67px;font-size:28.6px;line-height:28.6px;height:28.6px;color:#000;white-space:pre;left:315.40px;transform:scaleX(0.9925);transform-origin:0 0;">301.05</div>
<div style="left:231px;top:637.76px;width:29px;height:2.6px;background:repeating-linear-gradient(to right,#8c8c8c 0,#8c8c8c 2.6px,transparent 2.6px,transparent 5.3px);"></div>
<div style="top:621.55px;font-size:28.6px;line-height:28.6px;height:28.6px;color:#000;white-space:pre;left:315.40px;transform:scaleX(1.0044);transform-origin:0 0;">SUBTOTAL 1</div>
<div style="left:192.8px;top:680.64px;width:18.4px;height:2.6px;background:repeating-linear-gradient(to right,#8c8c8c 0,#8c8c8c 2.6px,transparent 2.6px,transparent 5.3px);"></div>
<div style="left:167.1px;top:670.24px;width:23.4px;height:23.4px;background:#fff;border:2.4px solid #808080;"></div>
<div style="left:171.8px;top:680.44px;width:14px;height:3px;background:#000;"></div>
<div style="left:177.3px;top:674.94px;width:3px;height:14px;background:#000;"></div>
<svg style="left:206.7px;top:659.94px" width="44" height="44" viewBox="0 0 44 44" ><path d="M15 1H27Q29 1 31 3L39 11Q41 13 41 15V27Q41 29 39 31L31 39Q29 41 27 41H15Q13 41 11 39L3 31Q1 29 1 27V15Q1 13 3 11L11 3Q13 1 15 1Z" fill="#0a7a1a" transform="translate(5.6,5.2) scale(.78)" opacity=".45"/><path d="M15 1H27Q29 1 31 3L39 11Q41 13 41 15V27Q41 29 39 31L31 39Q29 41 27 41H15Q13 41 11 39L3 31Q1 29 1 27V15Q1 13 3 11L11 3Q13 1 15 1Z" fill="#00cc2c" transform="translate(4.6,4.2) scale(.76)"/></svg>
<div style="top:664.43px;font-size:28.6px;line-height:28.6px;height:28.6px;color:#000;white-space:pre;left:264.20px;transform:scaleX(0.9852);transform-origin:0 0;">SECTION 2</div>
<div style="left:179.8px;top:723.52px;width:31.4px;height:2.6px;background:repeating-linear-gradient(to right,#8c8c8c 0,#8c8c8c 2.6px,transparent 2.6px,transparent 5.3px);"></div>
<svg style="left:206.7px;top:702.82px" width="44" height="44" viewBox="0 0 44 44" ><path d="M15 1H27Q29 1 31 3L39 11Q41 13 41 15V27Q41 29 39 31L31 39Q29 41 27 41H15Q13 41 11 39L3 31Q1 29 1 27V15Q1 13 3 11L11 3Q13 1 15 1Z" fill="#a00000" transform="translate(5.6,5.2) scale(.78)" opacity=".45"/><path d="M15 1H27Q29 1 31 3L39 11Q41 13 41 15V27Q41 29 39 31L31 39Q29 41 27 41H15Q13 41 11 39L3 31Q1 29 1 27V15Q1 13 3 11L11 3Q13 1 15 1Z" fill="#ff0000" transform="translate(4.6,4.2) scale(.76)"/></svg>
<div style="top:707.31px;font-size:28.6px;line-height:28.6px;height:28.6px;color:#000;white-space:pre;left:264.20px;transform:scaleX(0.9705);transform-origin:0 0;">600</div>
<div style="left:141.6px;top:766.4px;width:13.4px;height:2.6px;background:repeating-linear-gradient(to right,#8c8c8c 0,#8c8c8c 2.6px,transparent 2.6px,transparent 5.3px);"></div>
<div style="left:115.9px;top:756px;width:23.4px;height:23.4px;background:#fff;border:2.4px solid #808080;"></div>
<div style="left:120.6px;top:766.2px;width:14px;height:3px;background:#000;"></div>
<div style="left:126.1px;top:760.7px;width:3px;height:14px;background:#000;"></div>
<svg style="left:153px;top:742.2px" width="44" height="44" viewBox="0 0 44 44" ><path d="M2 14Q2 10 6 10H12V42H6Q2 42 2 38Z" fill="#d8a428"/><path d="M2 22H42V38Q42 42 38 42H6Q2 42 2 38Z" fill="#e6b030"/><path d="M13 3H32L38 9V30H13Z" fill="#eef4fc" stroke="#6f9be0" stroke-width="1.6"/><path d="M32 3V9H38Z" fill="#3d8bf0"/><path d="M17 9H29M17 14H33" stroke="#a4c4f4" stroke-width="2"/><rect x="11" y="22" width="28" height="14" fill="#e4ecf4" stroke="#9ab0cc" stroke-width="1.5"/><path d="M17 27H33" stroke="#a4c4f4" stroke-width="2"/><path d="M5 38H40" stroke="#ffe27a" stroke-width="3"/></svg>
<div style="top:750.19px;font-size:28.6px;line-height:28.6px;height:28.6px;color:#000;white-space:pre;left:213.00px;transform:scaleX(0.9360);transform-origin:0 0;">Item Library</div>
<div style="left:141.6px;top:809.28px;width:13.4px;height:2.6px;background:repeating-linear-gradient(to right,#8c8c8c 0,#8c8c8c 2.6px,transparent 2.6px,transparent 5.3px);"></div>
<div style="left:115.9px;top:798.88px;width:23.4px;height:23.4px;background:#fff;border:2.4px solid #808080;"></div>
<div style="left:120.6px;top:809.08px;width:14px;height:3px;background:#000;"></div>
<svg style="left:153px;top:785.08px" width="44" height="44" viewBox="0 0 44 44" ><path d="M2 14Q2 10 6 10H12V42H6Q2 42 2 38Z" fill="#d8a428"/><path d="M2 22H42V38Q42 42 38 42H6Q2 42 2 38Z" fill="#e6b030"/><path d="M13 3H32L38 9V30H13Z" fill="#eef4fc" stroke="#6f9be0" stroke-width="1.6"/><path d="M32 3V9H38Z" fill="#3d8bf0"/><path d="M17 9H29M17 14H33" stroke="#a4c4f4" stroke-width="2"/><rect x="11" y="22" width="28" height="14" fill="#e4ecf4" stroke="#9ab0cc" stroke-width="1.5"/><path d="M17 27H33" stroke="#a4c4f4" stroke-width="2"/><path d="M5 38H40" stroke="#ffe27a" stroke-width="3"/></svg>
<div style="top:793.07px;font-size:28.6px;line-height:28.6px;height:28.6px;color:#000;white-space:pre;left:213.00px;transform:scaleX(1.0119);transform-origin:0 0;">Rate Tables</div>
<div style="left:179.8px;top:852.16px;width:26.4px;height:2.6px;background:repeating-linear-gradient(to right,#8c8c8c 0,#8c8c8c 2.6px,transparent 2.6px,transparent 5.3px);"></div>
<svg style="left:206.7px;top:831.46px" width="44" height="44" viewBox="0 0 44 44" ><path d="M0 38Q6 32 14 32H30Q38 32 44 38V42H0Z" fill="#2a8ac0"/><path d="M9 18Q9 36 22 38Q35 36 35 18Z" fill="#d8a830"/><path d="M22 38Q35 36 35 18H28Z" fill="#a87818"/><path d="M4 16Q4 1 22 1Q40 1 40 14L36 18H2Z" fill="#f4e000"/><path d="M12 6Q16 3 22 3" stroke="#fff" stroke-width="3" fill="none"/><rect x="17" y="20" width="5" height="3" fill="#b8e8ff"/><rect x="28" y="20" width="5" height="3" fill="#b8e8ff"/><path d="M25 32H32" stroke="#604000" stroke-width="2"/></svg>
<div style="top:835.95px;font-size:28.6px;line-height:28.6px;height:28.6px;color:#000;white-space:pre;left:264.20px;transform:scaleX(0.9695);transform-origin:0 0;">Labor</div>
<div style="left:179.8px;top:895.04px;width:26.4px;height:2.6px;background:repeating-linear-gradient(to right,#8c8c8c 0,#8c8c8c 2.6px,transparent 2.6px,transparent 5.3px);"></div>
<svg style="left:206.7px;top:874.34px" width="44" height="44" viewBox="0 0 44 44" ><path d="M2 12Q7 24 2 38" stroke="#101010" stroke-width="3" fill="none"/><path d="M8 22L18 14L22 6H32L36 14H42V26H8Z" fill="#d8c818"/><path d="M8 22H42V28H8Z" fill="#a89808"/><rect x="24" y="9" width="7" height="6" fill="#e0e4ff"/><rect x="8" y="28" width="36" height="9" rx="4" fill="#4a4a4a"/><path d="M12 31H40" stroke="#c8c8c8" stroke-width="3"/></svg>
<div style="top:878.83px;font-size:28.6px;line-height:28.6px;height:28.6px;color:#000;white-space:pre;left:264.20px;transform:scaleX(0.9532);transform-origin:0 0;">Equipment</div>
<div style="left:179.8px;top:937.92px;width:26.4px;height:2.6px;background:repeating-linear-gradient(to right,#8c8c8c 0,#8c8c8c 2.6px,transparent 2.6px,transparent 5.3px);"></div>
<svg style="left:206.7px;top:917.22px" width="44" height="44" viewBox="0 0 44 44" ><path d="M28 2L42 8V30L34 36H28Z" fill="#f05808"/><path d="M33 8V30M38 10V28" stroke="#c03c00" stroke-width="1.5"/><path d="M3 10V38M3 33H30" stroke="#f05808" stroke-width="5" fill="none"/><ellipse cx="16" cy="17" rx="11" ry="14" fill="#505050"/><ellipse cx="15" cy="6" rx="6" ry="3.5" fill="#0a0a0a"/><path d="M5 19Q16 23 27 19" stroke="#f05808" stroke-width="3" fill="none"/><circle cx="32" cy="37" r="6" fill="#fff" stroke="#101010" stroke-width="3"/><circle cx="32" cy="37" r="1.6" fill="#f05050"/></svg>
<div style="top:921.71px;font-size:28.6px;line-height:28.6px;height:28.6px;color:#000;white-space:pre;left:264.20px;transform:scaleX(0.9667);transform-origin:0 0;">Rental</div>
<div style="left:179.8px;top:980.8px;width:26.4px;height:2.6px;background:repeating-linear-gradient(to right,#8c8c8c 0,#8c8c8c 2.6px,transparent 2.6px,transparent 5.3px);"></div>
<svg style="left:206.7px;top:960.1px" width="44" height="44" viewBox="0 0 44 44" ><path d="M6 14L28 2H44V8L22 20H6Z" fill="#b05858"/><path d="M6 14H22V20H6Z" fill="#8c3c3c"/><path d="M14 20L30 10V32L14 40Z" fill="#a04848"/><path d="M11 20H18V38H11Z" fill="#8c3c3c"/><path d="M6 36L28 26H44V32L22 42H6Z" fill="#b86060"/><path d="M6 36H22V42H6Z" fill="#8c3c3c"/></svg>
<div style="top:964.59px;font-size:28.6px;line-height:28.6px;height:28.6px;color:#000;white-space:pre;left:264.20px;transform:scaleX(0.9469);transform-origin:0 0;">Material</div>
<div style="left:179.8px;top:1023.68px;width:26.4px;height:2.6px;background:repeating-linear-gradient(to right,#8c8c8c 0,#8c8c8c 2.6px,transparent 2.6px,transparent 5.3px);"></div>
<svg style="left:206.7px;top:1002.98px" width="44" height="44" viewBox="0 0 44 44" ><path d="M8 30V42M34 30V42" stroke="#808080" stroke-width="4"/><rect x="1" y="3" width="41" height="28" rx="5" fill="#20c830" stroke="#0a8a18" stroke-width="2.5"/><path d="M6 18H18M24 18H37M14 14L18 18L14 22M28 14L24 18L28 22" stroke="#fff" stroke-width="2.5" fill="none" stroke-dasharray="3 1.5"/></svg>
<div style="top:1007.47px;font-size:28.6px;line-height:28.6px;height:28.6px;color:#000;white-space:pre;left:264.20px;transform:scaleX(1.0011);transform-origin:0 0;">Subcontractor</div>
<div style="left:179.8px;top:1066.56px;width:26.4px;height:2.6px;background:repeating-linear-gradient(to right,#8c8c8c 0,#8c8c8c 2.6px,transparent 2.6px,transparent 5.3px);"></div>
<svg style="left:206.7px;top:1045.86px" width="44" height="44" viewBox="0 0 44 44" ><path d="M3 14L14 4H38L28 14Z" fill="#c8a868"/><path d="M28 14L38 4V32L28 42Z" fill="#7c6030"/><rect x="3" y="14" width="25" height="28" fill="#d8b878" stroke="#7c6030" stroke-width="1.5"/><text x="15" y="38" text-anchor="middle" font-family="Liberation Sans, sans-serif" font-weight="bold" font-size="24" fill="#2828e0">?</text></svg>
<div style="top:1050.35px;font-size:28.6px;line-height:28.6px;height:28.6px;color:#000;white-space:pre;left:264.20px;transform:scaleX(0.9540);transform-origin:0 0;">Haul</div>
<div style="left:179.8px;top:1109.44px;width:26.4px;height:2.6px;background:repeating-linear-gradient(to right,#8c8c8c 0,#8c8c8c 2.6px,transparent 2.6px,transparent 5.3px);"></div>
<svg style="left:204.2px;top:1085.24px" width="44" height="44" viewBox="0 0 44 44" ><path d="M3 10Q3 6 7 6H16L20 11H34Q37 11 37 14V34Q37 38 33 38H7Q3 38 3 34Z" fill="#d8a428"/><path d="M6 38Q3 38 4 34L8 19Q9 16 12 16H38Q42 16 41 20L37 35Q36 38 33 38Z" fill="#ffe27a" stroke="#e2ae30" stroke-width="1.5"/><path d="M9 21Q10 18 13 18H37" stroke="#fff6c8" stroke-width="1.5" fill="none"/></svg>
<div style="top:1093.23px;font-size:28.6px;line-height:28.6px;height:28.6px;color:#000;white-space:pre;left:264.20px;transform:scaleX(0.9504);transform-origin:0 0;">Crews</div>
<div style="left:179.8px;top:1152.32px;width:26.4px;height:2.6px;background:repeating-linear-gradient(to right,#8c8c8c 0,#8c8c8c 2.6px,transparent 2.6px,transparent 5.3px);"></div>
<svg style="left:206.7px;top:1131.62px" width="44" height="44" viewBox="0 0 44 44" ><circle cx="28" cy="22" r="14" fill="#fff" stroke="#3050d0" stroke-width="2" stroke-dasharray="5 2.5"/><path d="M22 22L27 27L35 15" stroke="#3050d0" stroke-width="2" fill="none"/><circle cx="9" cy="6" r="5" fill="#2060c8"/><path d="M3 14Q9 10 15 14V42H10V28H8V42H3Z" fill="#2a78d8"/></svg>
<div style="top:1136.11px;font-size:28.6px;line-height:28.6px;height:28.6px;color:#000;white-space:pre;left:264.20px;transform:scaleX(0.9451);transform-origin:0 0;">Factors</div>
<div style="left:179.8px;top:1195.2px;width:26.4px;height:2.6px;background:repeating-linear-gradient(to right,#8c8c8c 0,#8c8c8c 2.6px,transparent 2.6px,transparent 5.3px);"></div>
<svg style="left:206.7px;top:1174.5px" width="44" height="44" viewBox="0 0 44 44" ><path d="M2 2L16 8" stroke="#606060" stroke-width="2"/><path d="M14 8L34 22L26 30L16 36Z" fill="#484848"/><path d="M26 30L34 22L38 34L28 42L20 40Z" fill="#f4f4f4" stroke="#707070" stroke-width="1.5"/><path d="M27 36L31 32" stroke="#404040" stroke-width="1.5"/></svg>
<div style="top:1178.99px;font-size:28.6px;line-height:28.6px;height:28.6px;color:#000;white-space:pre;left:264.20px;transform:scaleX(0.9686);transform-origin:0 0;">Defaults</div>
<div style="left:141.6px;top:1238.08px;width:13.4px;height:2.6px;background:repeating-linear-gradient(to right,#8c8c8c 0,#8c8c8c 2.6px,transparent 2.6px,transparent 5.3px);"></div>
<div style="left:115.9px;top:1227.68px;width:23.4px;height:23.4px;background:#fff;border:2.4px solid #808080;"></div>
<div style="left:120.6px;top:1237.88px;width:14px;height:3px;background:#000;"></div>
<div style="left:126.1px;top:1232.38px;width:3px;height:14px;background:#000;"></div>
<svg style="left:153px;top:1213.88px" width="44" height="44" viewBox="0 0 44 44" ><path d="M2 14Q2 10 6 10H12V42H6Q2 42 2 38Z" fill="#d8a428"/><path d="M2 22H42V38Q42 42 38 42H6Q2 42 2 38Z" fill="#e6b030"/><path d="M13 3H32L38 9V30H13Z" fill="#eef4fc" stroke="#6f9be0" stroke-width="1.6"/><path d="M32 3V9H38Z" fill="#3d8bf0"/><path d="M17 9H29M17 14H33" stroke="#a4c4f4" stroke-width="2"/><rect x="11" y="22" width="28" height="14" fill="#e4ecf4" stroke="#9ab0cc" stroke-width="1.5"/><path d="M17 27H33" stroke="#a4c4f4" stroke-width="2"/><path d="M5 38H40" stroke="#ffe27a" stroke-width="3"/></svg>
<div style="top:1221.87px;font-size:28.6px;line-height:28.6px;height:28.6px;color:#000;white-space:pre;left:213.00px;transform:scaleX(0.9913);transform-origin:0 0;">SMC Tables</div>
<div style="left:141.6px;top:1280.96px;width:13.4px;height:2.6px;background:repeating-linear-gradient(to right,#8c8c8c 0,#8c8c8c 2.6px,transparent 2.6px,transparent 5.3px);"></div>
<div style="left:115.9px;top:1270.56px;width:23.4px;height:23.4px;background:#fff;border:2.4px solid #808080;"></div>
<div style="left:120.6px;top:1280.76px;width:14px;height:3px;background:#000;"></div>
<svg style="left:153px;top:1256.76px" width="44" height="44" viewBox="0 0 44 44" ><path d="M2 14Q2 10 6 10H12V42H6Q2 42 2 38Z" fill="#d8a428"/><path d="M2 22H42V38Q42 42 38 42H6Q2 42 2 38Z" fill="#e6b030"/><path d="M13 3H32L38 9V30H13Z" fill="#eef4fc" stroke="#6f9be0" stroke-width="1.6"/><path d="M32 3V9H38Z" fill="#3d8bf0"/><path d="M17 9H29M17 14H33" stroke="#a4c4f4" stroke-width="2"/><rect x="11" y="22" width="28" height="14" fill="#e4ecf4" stroke="#9ab0cc" stroke-width="1.5"/><path d="M17 27H33" stroke="#a4c4f4" stroke-width="2"/><path d="M5 38H40" stroke="#ffe27a" stroke-width="3"/></svg>
<div style="top:1264.75px;font-size:28.6px;line-height:28.6px;height:28.6px;color:#000;white-space:pre;left:213.00px;transform:scaleX(1.0098);transform-origin:0 0;">RTC Tables</div>
<div style="left:179.8px;top:1323.84px;width:26.4px;height:2.6px;background:repeating-linear-gradient(to right,#8c8c8c 0,#8c8c8c 2.6px,transparent 2.6px,transparent 5.3px);"></div>
<svg style="left:204.2px;top:1299.64px" width="44" height="44" viewBox="0 0 44 44" ><path d="M3 10Q3 6 7 6H16L20 11H34Q37 11 37 14V34Q37 38 33 38H7Q3 38 3 34Z" fill="#d8a428"/><path d="M6 38Q3 38 4 34L8 19Q9 16 12 16H38Q42 16 41 20L37 35Q36 38 33 38Z" fill="#ffe27a" stroke="#e2ae30" stroke-width="1.5"/><path d="M9 21Q10 18 13 18H37" stroke="#fff6c8" stroke-width="1.5" fill="none"/></svg>
<div style="top:1307.63px;font-size:28.6px;line-height:28.6px;height:28.6px;color:#000;white-space:pre;left:264.20px;transform:scaleX(0.9955);transform-origin:0 0;">AGGREGATE</div>
<div style="left:39.2px;top:1366.72px;width:13.4px;height:2.6px;background:repeating-linear-gradient(to right,#8c8c8c 0,#8c8c8c 2.6px,transparent 2.6px,transparent 5.3px);"></div>
<div style="left:13.5px;top:1356.32px;width:23.4px;height:23.4px;background:#fff;border:2.4px solid #808080;"></div>
<div style="left:18.2px;top:1366.52px;width:14px;height:3px;background:#000;"></div>
<div style="left:23.7px;top:1361.02px;width:3px;height:14px;background:#000;"></div>
<svg style="left:52.1px;top:1348.02px" width="44" height="44" viewBox="0 0 44 44" ><path d="M1 13L13 3H37L43 11V21L30 29L1 21Z" fill="#7a7a7a"/><path d="M1 13L13 3H37L43 11L30 19Z" fill="url(#dg)"/><path d="M1 13L30 19V29L1 21Z" fill="#a4a4a4"/><path d="M30 19L43 11V21L30 29Z" fill="#5e5e5e"/><ellipse cx="36.5" cy="19.5" rx="2.4" ry="2.8" fill="#8c94e0"/><path d="M9 11L18 5H29L21 11Z" fill="#fff" opacity=".9"/><path d="M4 24L30 31L43 23" stroke="#c8c8c8" stroke-width="2" fill="none" opacity=".7"/></svg>
<div style="top:1350.51px;font-size:28.6px;line-height:28.6px;height:28.6px;color:#000;white-space:pre;left:110.60px;transform:scaleX(0.9989);transform-origin:0 0;">Recent Projects</div>
<div style="left:39.2px;top:1409.6px;width:13.4px;height:2.6px;background:repeating-linear-gradient(to right,#8c8c8c 0,#8c8c8c 2.6px,transparent 2.6px,transparent 5.3px);"></div>
<div style="left:13.5px;top:1399.2px;width:23.4px;height:23.4px;background:#fff;border:2.4px solid #808080;"></div>
<div style="left:18.2px;top:1409.4px;width:14px;height:3px;background:#000;"></div>
<div style="left:23.7px;top:1403.9px;width:3px;height:14px;background:#000;"></div>
<svg style="left:52.1px;top:1390.9px" width="44" height="44" viewBox="0 0 44 44" ><path d="M1 13L13 3H37L43 11V21L30 29L1 21Z" fill="#7a7a7a"/><path d="M1 13L13 3H37L43 11L30 19Z" fill="url(#dg)"/><path d="M1 13L30 19V29L1 21Z" fill="#a4a4a4"/><path d="M30 19L43 11V21L30 29Z" fill="#5e5e5e"/><ellipse cx="36.5" cy="19.5" rx="2.4" ry="2.8" fill="#8c94e0"/><path d="M9 11L18 5H29L21 11Z" fill="#fff" opacity=".9"/><path d="M4 24L30 31L43 23" stroke="#c8c8c8" stroke-width="2" fill="none" opacity=".7"/></svg>
<div style="top:1393.39px;font-size:28.6px;line-height:28.6px;height:28.6px;color:#000;white-space:pre;left:110.60px;transform:scaleX(0.9801);transform-origin:0 0;">Unclassified Projects</div>
<div style="left:39.2px;top:1452.48px;width:13.4px;height:2.6px;background:repeating-linear-gradient(to right,#8c8c8c 0,#8c8c8c 2.6px,transparent 2.6px,transparent 5.3px);"></div>
<div style="left:13.5px;top:1442.08px;width:23.4px;height:23.4px;background:#fff;border:2.4px solid #808080;"></div>
<div style="left:18.2px;top:1452.28px;width:14px;height:3px;background:#000;"></div>
<div style="left:23.7px;top:1446.78px;width:3px;height:14px;background:#000;"></div>
<svg style="left:52.1px;top:1433.78px" width="44" height="44" viewBox="0 0 44 44" ><path d="M1 13L13 3H37L43 11V21L30 29L1 21Z" fill="#7a7a7a"/><path d="M1 13L13 3H37L43 11L30 19Z" fill="url(#dg)"/><path d="M1 13L30 19V29L1 21Z" fill="#a4a4a4"/><path d="M30 19L43 11V21L30 29Z" fill="#5e5e5e"/><ellipse cx="36.5" cy="19.5" rx="2.4" ry="2.8" fill="#8c94e0"/><path d="M9 11L18 5H29L21 11Z" fill="#fff" opacity=".9"/><path d="M4 24L30 31L43 23" stroke="#c8c8c8" stroke-width="2" fill="none" opacity=".7"/></svg>
<div style="top:1436.27px;font-size:28.6px;line-height:28.6px;height:28.6px;color:#000;white-space:pre;left:110.60px;transform:scaleX(0.9974);transform-origin:0 0;">02 - Active Budgeted Projects</div>
<div style="left:39.2px;top:1495.36px;width:13.4px;height:2.6px;background:repeating-linear-gradient(to right,#8c8c8c 0,#8c8c8c 2.6px,transparent 2.6px,transparent 5.3px);"></div>
<div style="left:13.5px;top:1484.96px;width:23.4px;height:23.4px;background:#fff;border:2.4px solid #808080;"></div>
<div style="left:18.2px;top:1495.16px;width:14px;height:3px;background:#000;"></div>
<div style="left:23.7px;top:1489.66px;width:3px;height:14px;background:#000;"></div>
<svg style="left:52.1px;top:1476.66px" width="44" height="44" viewBox="0 0 44 44" ><path d="M1 13L13 3H37L43 11V21L30 29L1 21Z" fill="#7a7a7a"/><path d="M1 13L13 3H37L43 11L30 19Z" fill="url(#dg)"/><path d="M1 13L30 19V29L1 21Z" fill="#a4a4a4"/><path d="M30 19L43 11V21L30 29Z" fill="#5e5e5e"/><ellipse cx="36.5" cy="19.5" rx="2.4" ry="2.8" fill="#8c94e0"/><path d="M9 11L18 5H29L21 11Z" fill="#fff" opacity=".9"/><path d="M4 24L30 31L43 23" stroke="#c8c8c8" stroke-width="2" fill="none" opacity=".7"/></svg>
<div style="top:1479.15px;font-size:28.6px;line-height:28.6px;height:28.6px;color:#000;white-space:pre;left:110.60px;transform:scaleX(0.9983);transform-origin:0 0;">2019</div>
<div style="left:39.2px;top:1538.24px;width:13.4px;height:2.6px;background:repeating-linear-gradient(to right,#8c8c8c 0,#8c8c8c 2.6px,transparent 2.6px,transparent 5.3px);"></div>
<div style="left:13.5px;top:1527.84px;width:23.4px;height:23.4px;background:#fff;border:2.4px solid #808080;"></div>
<div style="left:18.2px;top:1538.04px;width:14px;height:3px;background:#000;"></div>
<div style="left:23.7px;top:1532.54px;width:3px;height:14px;background:#000;"></div>
<svg style="left:52.1px;top:1519.54px" width="44" height="44" viewBox="0 0 44 44" ><path d="M1 13L13 3H37L43 11V21L30 29L1 21Z" fill="#7a7a7a"/><path d="M1 13L13 3H37L43 11L30 19Z" fill="url(#dg)"/><path d="M1 13L30 19V29L1 21Z" fill="#a4a4a4"/><path d="M30 19L43 11V21L30 29Z" fill="#5e5e5e"/><ellipse cx="36.5" cy="19.5" rx="2.4" ry="2.8" fill="#8c94e0"/><path d="M9 11L18 5H29L21 11Z" fill="#fff" opacity=".9"/><path d="M4 24L30 31L43 23" stroke="#c8c8c8" stroke-width="2" fill="none" opacity=".7"/></svg>
<div style="top:1522.03px;font-size:28.6px;line-height:28.6px;height:28.6px;color:#000;white-space:pre;left:110.60px;transform:scaleX(0.9924);transform-origin:0 0;">2022 VTS</div>
<div style="left:26.2px;top:1581.12px;width:26.4px;height:2.6px;background:repeating-linear-gradient(to right,#8c8c8c 0,#8c8c8c 2.6px,transparent 2.6px,transparent 5.3px);"></div>
<svg style="left:52.1px;top:1562.42px" width="44" height="44" viewBox="0 0 44 44" ><path d="M1 13L13 3H37L43 11V21L30 29L1 21Z" fill="#7a7a7a"/><path d="M1 13L13 3H37L43 11L30 19Z" fill="url(#dg)"/><path d="M1 13L30 19V29L1 21Z" fill="#a4a4a4"/><path d="M30 19L43 11V21L30 29Z" fill="#5e5e5e"/><ellipse cx="36.5" cy="19.5" rx="2.4" ry="2.8" fill="#8c94e0"/><path d="M9 11L18 5H29L21 11Z" fill="#fff" opacity=".9"/><path d="M4 24L30 31L43 23" stroke="#c8c8c8" stroke-width="2" fill="none" opacity=".7"/></svg>
<div style="top:1564.91px;font-size:28.6px;line-height:28.6px;height:28.6px;color:#000;white-space:pre;left:110.60px;transform:scaleX(0.9858);transform-origin:0 0;">Awarded Projects</div>
<div style="left:39.2px;top:1624px;width:13.4px;height:2.6px;background:repeating-linear-gradient(to right,#8c8c8c 0,#8c8c8c 2.6px,transparent 2.6px,transparent 5.3px);"></div>
<div style="left:13.5px;top:1613.6px;width:23.4px;height:23.4px;background:#fff;border:2.4px solid #808080;"></div>
<div style="left:18.2px;top:1623.8px;width:14px;height:3px;background:#000;"></div>
<div style="left:23.7px;top:1618.3px;width:3px;height:14px;background:#000;"></div>
<svg style="left:52.1px;top:1605.3px" width="44" height="44" viewBox="0 0 44 44" ><path d="M1 13L13 3H37L43 11V21L30 29L1 21Z" fill="#7a7a7a"/><path d="M1 13L13 3H37L43 11L30 19Z" fill="url(#dg)"/><path d="M1 13L30 19V29L1 21Z" fill="#a4a4a4"/><path d="M30 19L43 11V21L30 29Z" fill="#5e5e5e"/><ellipse cx="36.5" cy="19.5" rx="2.4" ry="2.8" fill="#8c94e0"/><path d="M9 11L18 5H29L21 11Z" fill="#fff" opacity=".9"/><path d="M4 24L30 31L43 23" stroke="#c8c8c8" stroke-width="2" fill="none" opacity=".7"/></svg>
<div style="top:1607.79px;font-size:28.6px;line-height:28.6px;height:28.6px;color:#000;white-space:pre;left:110.60px;transform:scaleX(0.9580);transform-origin:0 0;">Bid - In Progress</div>
<div style="left:39.2px;top:1666.88px;width:13.4px;height:2.6px;background:repeating-linear-gradient(to right,#8c8c8c 0,#8c8c8c 2.6px,transparent 2.6px,transparent 5.3px);"></div>
<div style="left:13.5px;top:1656.48px;width:23.4px;height:23.4px;background:#fff;border:2.4px solid #808080;"></div>
<div style="left:18.2px;top:1666.68px;width:14px;height:3px;background:#000;"></div>
<div style="left:23.7px;top:1661.18px;width:3px;height:14px;background:#000;"></div>
<svg style="left:52.1px;top:1648.18px" width="44" height="44" viewBox="0 0 44 44" ><path d="M1 13L13 3H37L43 11V21L30 29L1 21Z" fill="#7a7a7a"/><path d="M1 13L13 3H37L43 11L30 19Z" fill="url(#dg)"/><path d="M1 13L30 19V29L1 21Z" fill="#a4a4a4"/><path d="M30 19L43 11V21L30 29Z" fill="#5e5e5e"/><ellipse cx="36.5" cy="19.5" rx="2.4" ry="2.8" fill="#8c94e0"/><path d="M9 11L18 5H29L21 11Z" fill="#fff" opacity=".9"/><path d="M4 24L30 31L43 23" stroke="#c8c8c8" stroke-width="2" fill="none" opacity=".7"/></svg>
<div style="top:1650.67px;font-size:28.6px;line-height:28.6px;height:28.6px;color:#000;white-space:pre;left:110.60px;transform:scaleX(0.9582);transform-origin:0 0;">Bidding</div>
<div style="left:39.2px;top:1709.76px;width:13.4px;height:2.6px;background:repeating-linear-gradient(to right,#8c8c8c 0,#8c8c8c 2.6px,transparent 2.6px,transparent 5.3px);"></div>
<div style="left:13.5px;top:1699.36px;width:23.4px;height:23.4px;background:#fff;border:2.4px solid #808080;"></div>
<div style="left:18.2px;top:1709.56px;width:14px;height:3px;background:#000;"></div>
<div style="left:23.7px;top:1704.06px;width:3px;height:14px;background:#000;"></div>
<svg style="left:52.1px;top:1691.06px" width="44" height="44" viewBox="0 0 44 44" ><path d="M1 13L13 3H37L43 11V21L30 29L1 21Z" fill="#7a7a7a"/><path d="M1 13L13 3H37L43 11L30 19Z" fill="url(#dg)"/><path d="M1 13L30 19V29L1 21Z" fill="#a4a4a4"/><path d="M30 19L43 11V21L30 29Z" fill="#5e5e5e"/><ellipse cx="36.5" cy="19.5" rx="2.4" ry="2.8" fill="#8c94e0"/><path d="M9 11L18 5H29L21 11Z" fill="#fff" opacity=".9"/><path d="M4 24L30 31L43 23" stroke="#c8c8c8" stroke-width="2" fill="none" opacity=".7"/></svg>
<div style="top:1693.55px;font-size:28.6px;line-height:28.6px;height:28.6px;color:#000;white-space:pre;left:110.60px;transform:scaleX(0.9729);transform-origin:0 0;">Bidding - Construction</div>
<div style="left:26.2px;top:1752.64px;width:26.4px;height:2.6px;background:repeating-linear-gradient(to right,#8c8c8c 0,#8c8c8c 2.6px,transparent 2.6px,transparent 5.3px);"></div>
<svg style="left:52.1px;top:1733.94px" width="44" height="44" viewBox="0 0 44 44" ><path d="M1 13L13 3H37L43 11V21L30 29L1 21Z" fill="#7a7a7a"/><path d="M1 13L13 3H37L43 11L30 19Z" fill="url(#dg)"/><path d="M1 13L30 19V29L1 21Z" fill="#a4a4a4"/><path d="M30 19L43 11V21L30 29Z" fill="#5e5e5e"/><ellipse cx="36.5" cy="19.5" rx="2.4" ry="2.8" fill="#8c94e0"/><path d="M9 11L18 5H29L21 11Z" fill="#fff" opacity=".9"/><path d="M4 24L30 31L43 23" stroke="#c8c8c8" stroke-width="2" fill="none" opacity=".7"/></svg>
<div style="top:1736.43px;font-size:28.6px;line-height:28.6px;height:28.6px;color:#000;white-space:pre;left:110.60px;transform:scaleX(0.9906);transform-origin:0 0;">BRIDGE</div>
<div style="left:39.2px;top:1795.52px;width:13.4px;height:2.6px;background:repeating-linear-gradient(to right,#8c8c8c 0,#8c8c8c 2.6px,transparent 2.6px,transparent 5.3px);"></div>
<div style="left:13.5px;top:1785.12px;width:23.4px;height:23.4px;background:#fff;border:2.4px solid #808080;"></div>
<div style="left:18.2px;top:1795.32px;width:14px;height:3px;background:#000;"></div>
<div style="left:23.7px;top:1789.82px;width:3px;height:14px;background:#000;"></div>
<svg style="left:52.1px;top:1776.82px" width="44" height="44" viewBox="0 0 44 44" ><path d="M1 13L13 3H37L43 11V21L30 29L1 21Z" fill="#7a7a7a"/><path d="M1 13L13 3H37L43 11L30 19Z" fill="url(#dg)"/><path d="M1 13L30 19V29L1 21Z" fill="#a4a4a4"/><path d="M30 19L43 11V21L30 29Z" fill="#5e5e5e"/><ellipse cx="36.5" cy="19.5" rx="2.4" ry="2.8" fill="#8c94e0"/><path d="M9 11L18 5H29L21 11Z" fill="#fff" opacity=".9"/><path d="M4 24L30 31L43 23" stroke="#c8c8c8" stroke-width="2" fill="none" opacity=".7"/></svg>
<div style="top:1779.31px;font-size:28.6px;line-height:28.6px;height:28.6px;color:#000;white-space:pre;left:110.60px;transform:scaleX(0.9792);transform-origin:0 0;">Construction - Project</div>
<div style="left:26.2px;top:1838.4px;width:26.4px;height:2.6px;background:repeating-linear-gradient(to right,#8c8c8c 0,#8c8c8c 2.6px,transparent 2.6px,transparent 5.3px);"></div>
<svg style="left:52.1px;top:1819.7px" width="44" height="44" viewBox="0 0 44 44" ><path d="M1 13L13 3H37L43 11V21L30 29L1 21Z" fill="#7a7a7a"/><path d="M1 13L13 3H37L43 11L30 19Z" fill="url(#dg)"/><path d="M1 13L30 19V29L1 21Z" fill="#a4a4a4"/><path d="M30 19L43 11V21L30 29Z" fill="#5e5e5e"/><ellipse cx="36.5" cy="19.5" rx="2.4" ry="2.8" fill="#8c94e0"/><path d="M9 11L18 5H29L21 11Z" fill="#fff" opacity=".9"/><path d="M4 24L30 31L43 23" stroke="#c8c8c8" stroke-width="2" fill="none" opacity=".7"/></svg>
<div style="top:1822.19px;font-size:28.6px;line-height:28.6px;height:28.6px;color:#000;white-space:pre;left:110.60px;transform:scaleX(0.9741);transform-origin:0 0;">Lost Projects</div>
<div style="left:39.2px;top:1881.28px;width:13.4px;height:2.6px;background:repeating-linear-gradient(to right,#8c8c8c 0,#8c8c8c 2.6px,transparent 2.6px,transparent 5.3px);"></div>
<div style="left:13.5px;top:1870.88px;width:23.4px;height:23.4px;background:#fff;border:2.4px solid #808080;"></div>
<div style="left:18.2px;top:1881.08px;width:14px;height:3px;background:#000;"></div>
<div style="left:23.7px;top:1875.58px;width:3px;height:14px;background:#000;"></div>
<svg style="left:52.1px;top:1862.58px" width="44" height="44" viewBox="0 0 44 44" ><path d="M1 13L13 3H37L43 11V21L30 29L1 21Z" fill="#7a7a7a"/><path d="M1 13L13 3H37L43 11L30 19Z" fill="url(#dg)"/><path d="M1 13L30 19V29L1 21Z" fill="#a4a4a4"/><path d="M30 19L43 11V21L30 29Z" fill="#5e5e5e"/><ellipse cx="36.5" cy="19.5" rx="2.4" ry="2.8" fill="#8c94e0"/><path d="M9 11L18 5H29L21 11Z" fill="#fff" opacity=".9"/><path d="M4 24L30 31L43 23" stroke="#c8c8c8" stroke-width="2" fill="none" opacity=".7"/></svg>
<div style="top:1865.07px;font-size:28.6px;line-height:28.6px;height:28.6px;color:#000;white-space:pre;left:110.60px;transform:scaleX(0.9737);transform-origin:0 0;">Master Projects</div>
<div style="left:39.2px;top:1924.16px;width:13.4px;height:2.6px;background:repeating-linear-gradient(to right,#8c8c8c 0,#8c8c8c 2.6px,transparent 2.6px,transparent 5.3px);"></div>
<div style="left:13.5px;top:1913.76px;width:23.4px;height:23.4px;background:#fff;border:2.4px solid #808080;"></div>
<div style="left:18.2px;top:1923.96px;width:14px;height:3px;background:#000;"></div>
<div style="left:23.7px;top:1918.46px;width:3px;height:14px;background:#000;"></div>
<svg style="left:52.1px;top:1905.46px" width="44" height="44" viewBox="0 0 44 44" ><path d="M1 13L13 3H37L43 11V21L30 29L1 21Z" fill="#7a7a7a"/><path d="M1 13L13 3H37L43 11L30 19Z" fill="url(#dg)"/><path d="M1 13L30 19V29L1 21Z" fill="#a4a4a4"/><path d="M30 19L43 11V21L30 29Z" fill="#5e5e5e"/><ellipse cx="36.5" cy="19.5" rx="2.4" ry="2.8" fill="#8c94e0"/><path d="M9 11L18 5H29L21 11Z" fill="#fff" opacity=".9"/><path d="M4 24L30 31L43 23" stroke="#c8c8c8" stroke-width="2" fill="none" opacity=".7"/></svg>
<div style="top:1907.95px;font-size:28.6px;line-height:28.6px;height:28.6px;color:#000;white-space:pre;left:110.60px;transform:scaleX(0.9804);transform-origin:0 0;">NYC Parks Department</div>
<div style="left:39.2px;top:1967.04px;width:13.4px;height:2.6px;background:repeating-linear-gradient(to right,#8c8c8c 0,#8c8c8c 2.6px,transparent 2.6px,transparent 5.3px);"></div>
<div style="left:13.5px;top:1956.64px;width:23.4px;height:23.4px;background:#fff;border:2.4px solid #808080;"></div>
<div style="left:18.2px;top:1966.84px;width:14px;height:3px;background:#000;"></div>
<div style="left:23.7px;top:1961.34px;width:3px;height:14px;background:#000;"></div>
<svg style="left:52.1px;top:1948.34px" width="44" height="44" viewBox="0 0 44 44" ><path d="M1 13L13 3H37L43 11V21L30 29L1 21Z" fill="#7a7a7a"/><path d="M1 13L13 3H37L43 11L30 19Z" fill="url(#dg)"/><path d="M1 13L30 19V29L1 21Z" fill="#a4a4a4"/><path d="M30 19L43 11V21L30 29Z" fill="#5e5e5e"/><ellipse cx="36.5" cy="19.5" rx="2.4" ry="2.8" fill="#8c94e0"/><path d="M9 11L18 5H29L21 11Z" fill="#fff" opacity=".9"/><path d="M4 24L30 31L43 23" stroke="#c8c8c8" stroke-width="2" fill="none" opacity=".7"/></svg>
<div style="top:1950.83px;font-size:28.6px;line-height:28.6px;height:28.6px;color:#000;white-space:pre;left:110.60px;transform:scaleX(0.9797);transform-origin:0 0;">Open Bids</div>
<div style="left:39.2px;top:2009.92px;width:13.4px;height:2.6px;background:repeating-linear-gradient(to right,#8c8c8c 0,#8c8c8c 2.6px,transparent 2.6px,transparent 5.3px);"></div>
<div style="left:13.5px;top:1999.52px;width:23.4px;height:23.4px;background:#fff;border:2.4px solid #808080;"></div>
<div style="left:18.2px;top:2009.72px;width:14px;height:3px;background:#000;"></div>
<div style="left:23.7px;top:2004.22px;width:3px;height:14px;background:#000;"></div>
<svg style="left:52.1px;top:1991.22px" width="44" height="44" viewBox="0 0 44 44" ><path d="M1 13L13 3H37L43 11V21L30 29L1 21Z" fill="#7a7a7a"/><path d="M1 13L13 3H37L43 11L30 19Z" fill="url(#dg)"/><path d="M1 13L30 19V29L1 21Z" fill="#a4a4a4"/><path d="M30 19L43 11V21L30 29Z" fill="#5e5e5e"/><ellipse cx="36.5" cy="19.5" rx="2.4" ry="2.8" fill="#8c94e0"/><path d="M9 11L18 5H29L21 11Z" fill="#fff" opacity=".9"/><path d="M4 24L30 31L43 23" stroke="#c8c8c8" stroke-width="2" fill="none" opacity=".7"/></svg>
<div style="top:1993.71px;font-size:28.6px;line-height:28.6px;height:28.6px;color:#000;white-space:pre;left:110.60px;transform:scaleX(0.9720);transform-origin:0 0;">Pending</div>
<div style="left:26.2px;top:2052.8px;width:26.4px;height:2.6px;background:repeating-linear-gradient(to right,#8c8c8c 0,#8c8c8c 2.6px,transparent 2.6px,transparent 5.3px);"></div>
<svg style="left:52.1px;top:2034.1px" width="44" height="44" viewBox="0 0 44 44" ><path d="M1 13L13 3H37L43 11V21L30 29L1 21Z" fill="#7a7a7a"/><path d="M1 13L13 3H37L43 11L30 19Z" fill="url(#dg)"/><path d="M1 13L30 19V29L1 21Z" fill="#a4a4a4"/><path d="M30 19L43 11V21L30 29Z" fill="#5e5e5e"/><ellipse cx="36.5" cy="19.5" rx="2.4" ry="2.8" fill="#8c94e0"/><path d="M9 11L18 5H29L21 11Z" fill="#fff" opacity=".9"/><path d="M4 24L30 31L43 23" stroke="#c8c8c8" stroke-width="2" fill="none" opacity=".7"/></svg>
<div style="top:2036.59px;font-size:28.6px;line-height:28.6px;height:28.6px;color:#000;white-space:pre;left:110.60px;transform:scaleX(1.0130);transform-origin:0 0;">ROADWORK</div>
<div style="left:39.2px;top:2095.68px;width:13.4px;height:2.6px;background:repeating-linear-gradient(to right,#8c8c8c 0,#8c8c8c 2.6px,transparent 2.6px,transparent 5.3px);"></div>
<div style="left:13.5px;top:2085.28px;width:23.4px;height:23.4px;background:#fff;border:2.4px solid #808080;"></div>
<div style="left:18.2px;top:2095.48px;width:14px;height:3px;background:#000;"></div>
<div style="left:23.7px;top:2089.98px;width:3px;height:14px;background:#000;"></div>
<svg style="left:52.1px;top:2076.98px" width="44" height="44" viewBox="0 0 44 44" ><path d="M1 13L13 3H37L43 11V21L30 29L1 21Z" fill="#7a7a7a"/><path d="M1 13L13 3H37L43 11L30 19Z" fill="url(#dg)"/><path d="M1 13L30 19V29L1 21Z" fill="#a4a4a4"/><path d="M30 19L43 11V21L30 29Z" fill="#5e5e5e"/><ellipse cx="36.5" cy="19.5" rx="2.4" ry="2.8" fill="#8c94e0"/><path d="M9 11L18 5H29L21 11Z" fill="#fff" opacity=".9"/><path d="M4 24L30 31L43 23" stroke="#c8c8c8" stroke-width="2" fill="none" opacity=".7"/></svg>
<div style="top:2079.47px;font-size:28.6px;line-height:28.6px;height:28.6px;color:#000;white-space:pre;left:110.60px;transform:scaleX(1.0203);transform-origin:0 0;">SANITARY SEWER</div>
<div style="left:39.2px;top:2138.56px;width:13.4px;height:2.6px;background:repeating-linear-gradient(to right,#8c8c8c 0,#8c8c8c 2.6px,transparent 2.6px,transparent 5.3px);"></div>
<div style="left:13.5px;top:2128.16px;width:23.4px;height:23.4px;background:#fff;border:2.4px solid #808080;"></div>
<div style="left:18.2px;top:2138.36px;width:14px;height:3px;background:#000;"></div>
<div style="left:23.7px;top:2132.86px;width:3px;height:14px;background:#000;"></div>
<svg style="left:52.1px;top:2119.86px" width="44" height="44" viewBox="0 0 44 44" ><path d="M1 13L13 3H37L43 11V21L30 29L1 21Z" fill="#7a7a7a"/><path d="M1 13L13 3H37L43 11L30 19Z" fill="url(#dg)"/><path d="M1 13L30 19V29L1 21Z" fill="#a4a4a4"/><path d="M30 19L43 11V21L30 29Z" fill="#5e5e5e"/><ellipse cx="36.5" cy="19.5" rx="2.4" ry="2.8" fill="#8c94e0"/><path d="M9 11L18 5H29L21 11Z" fill="#fff" opacity=".9"/><path d="M4 24L30 31L43 23" stroke="#c8c8c8" stroke-width="2" fill="none" opacity=".7"/></svg>
<div style="top:2122.35px;font-size:28.6px;line-height:28.6px;height:28.6px;color:#000;white-space:pre;left:110.60px;transform:scaleX(0.9981);transform-origin:0 0;">Template</div>
<div style="left:39.2px;top:2181.44px;width:13.4px;height:2.6px;background:repeating-linear-gradient(to right,#8c8c8c 0,#8c8c8c 2.6px,transparent 2.6px,transparent 5.3px);"></div>
<div style="left:13.5px;top:2171.04px;width:23.4px;height:23.4px;background:#fff;border:2.4px solid #808080;"></div>
<div style="left:18.2px;top:2181.24px;width:14px;height:3px;background:#000;"></div>
<div style="left:23.7px;top:2175.74px;width:3px;height:14px;background:#000;"></div>
<svg style="left:52.1px;top:2162.74px" width="44" height="44" viewBox="0 0 44 44" ><path d="M1 13L13 3H37L43 11V21L30 29L1 21Z" fill="#7a7a7a"/><path d="M1 13L13 3H37L43 11L30 19Z" fill="url(#dg)"/><path d="M1 13L30 19V29L1 21Z" fill="#a4a4a4"/><path d="M30 19L43 11V21L30 29Z" fill="#5e5e5e"/><ellipse cx="36.5" cy="19.5" rx="2.4" ry="2.8" fill="#8c94e0"/><path d="M9 11L18 5H29L21 11Z" fill="#fff" opacity=".9"/><path d="M4 24L30 31L43 23" stroke="#c8c8c8" stroke-width="2" fill="none" opacity=".7"/></svg>
<div style="top:2165.23px;font-size:28.6px;line-height:28.6px;height:28.6px;color:#000;white-space:pre;left:110.60px;transform:scaleX(0.9913);transform-origin:0 0;">TEST PROJECTS</div>
<div style="left:39.2px;top:2224.32px;width:13.4px;height:2.6px;background:repeating-linear-gradient(to right,#8c8c8c 0,#8c8c8c 2.6px,transparent 2.6px,transparent 5.3px);"></div>
<div style="left:13.5px;top:2213.92px;width:23.4px;height:23.4px;background:#fff;border:2.4px solid #808080;"></div>
<div style="left:18.2px;top:2224.12px;width:14px;height:3px;background:#000;"></div>
<div style="left:23.7px;top:2218.62px;width:3px;height:14px;background:#000;"></div>
<svg style="left:52.1px;top:2205.62px" width="44" height="44" viewBox="0 0 44 44" ><path d="M1 13L13 3H37L43 11V21L30 29L1 21Z" fill="#7a7a7a"/><path d="M1 13L13 3H37L43 11L30 19Z" fill="url(#dg)"/><path d="M1 13L30 19V29L1 21Z" fill="#a4a4a4"/><path d="M30 19L43 11V21L30 29Z" fill="#5e5e5e"/><ellipse cx="36.5" cy="19.5" rx="2.4" ry="2.8" fill="#8c94e0"/><path d="M9 11L18 5H29L21 11Z" fill="#fff" opacity=".9"/><path d="M4 24L30 31L43 23" stroke="#c8c8c8" stroke-width="2" fill="none" opacity=".7"/></svg>
<div style="top:2208.11px;font-size:28.6px;line-height:28.6px;height:28.6px;color:#000;white-space:pre;left:110.60px;transform:scaleX(1.0051);transform-origin:0 0;">Test Projects</div>
<div style="left:39.2px;top:2267.2px;width:13.4px;height:2.6px;background:repeating-linear-gradient(to right,#8c8c8c 0,#8c8c8c 2.6px,transparent 2.6px,transparent 5.3px);"></div>
<div style="left:13.5px;top:2256.8px;width:23.4px;height:23.4px;background:#fff;border:2.4px solid #808080;"></div>
<div style="left:18.2px;top:2267px;width:14px;height:3px;background:#000;"></div>
<div style="left:23.7px;top:2261.5px;width:3px;height:14px;background:#000;"></div>
<svg style="left:52.1px;top:2248.5px" width="44" height="44" viewBox="0 0 44 44" ><path d="M1 13L13 3H37L43 11V21L30 29L1 21Z" fill="#7a7a7a"/><path d="M1 13L13 3H37L43 11L30 19Z" fill="url(#dg)"/><path d="M1 13L30 19V29L1 21Z" fill="#a4a4a4"/><path d="M30 19L43 11V21L30 29Z" fill="#5e5e5e"/><ellipse cx="36.5" cy="19.5" rx="2.4" ry="2.8" fill="#8c94e0"/><path d="M9 11L18 5H29L21 11Z" fill="#fff" opacity=".9"/><path d="M4 24L30 31L43 23" stroke="#c8c8c8" stroke-width="2" fill="none" opacity=".7"/></svg>
<div style="top:2250.99px;font-size:28.6px;line-height:28.6px;height:28.6px;color:#000;white-space:pre;left:110.60px;transform:scaleX(0.9856);transform-origin:0 0;">Training Projects</div>
<div style="left:39.2px;top:2310.08px;width:13.4px;height:2.6px;background:repeating-linear-gradient(to right,#8c8c8c 0,#8c8c8c 2.6px,transparent 2.6px,transparent 5.3px);"></div>
<div style="left:13.5px;top:2299.68px;width:23.4px;height:23.4px;background:#fff;border:2.4px solid #808080;"></div>
<div style="left:18.2px;top:2309.88px;width:14px;height:3px;background:#000;"></div>
<div style="left:23.7px;top:2304.38px;width:3px;height:14px;background:#000;"></div>
<svg style="left:52.1px;top:2291.38px" width="44" height="44" viewBox="0 0 44 44" ><path d="M1 13L13 3H37L43 11V21L30 29L1 21Z" fill="#7a7a7a"/><path d="M1 13L13 3H37L43 11L30 19Z" fill="url(#dg)"/><path d="M1 13L30 19V29L1 21Z" fill="#a4a4a4"/><path d="M30 19L43 11V21L30 29Z" fill="#5e5e5e"/><ellipse cx="36.5" cy="19.5" rx="2.4" ry="2.8" fill="#8c94e0"/><path d="M9 11L18 5H29L21 11Z" fill="#fff" opacity=".9"/><path d="M4 24L30 31L43 23" stroke="#c8c8c8" stroke-width="2" fill="none" opacity=".7"/></svg>
<div style="top:2293.87px;font-size:28.6px;line-height:28.6px;height:28.6px;color:#000;white-space:pre;left:110.60px;transform:scaleX(0.9891);transform-origin:0 0;">Turn Key</div>
<div style="left:577px;top:342px;width:3664px;height:1777px;background:#fff;border-top:4px solid #727272;border-left:4.5px solid #727272;border-bottom:3px solid #fff;border-right:3px solid #fff;"></div>
<div style="left:581px;top:346px;width:3612px;height:131px;background:#f0f0f0;"></div>
<div style="left:4193px;top:346px;width:45px;height:1726px;background:#f0f0f0;"></div>
<div style="left:581px;top:2072px;width:3657px;height:45px;background:#f0f0f0;"></div>
<div style="left:626.5px;top:2090.3px;width:1953.5px;height:7.5px;background:#f8f8f8;"></div>
<div style="left:627.2px;top:2091.3px;width:1952px;height:5.5px;background:#7c7c7c;"></div>
<svg style="left:4206px;top:363px" width="24" height="14" viewBox="0 0 24 14"><path d="M0 14L12 0L24 14Z" fill="#a6a6a6"/></svg>
<svg style="left:4206px;top:2041px" width="24" height="14" viewBox="0 0 24 14"><path d="M0 0L12 14L24 0Z" fill="#a6a6a6"/></svg>
<div style="left:581px;top:478.5px;width:3612px;height:107.24px;background:#f0f0f0;"></div>
<div style="top:489.27px;font-size:33px;line-height:33px;height:33px;color:#000;white-space:pre;font-weight:bold;left:626.00px;transform:scaleX(0.9357);transform-origin:0 0;">SECTION 1</div>
<div style="top:540.17px;font-size:33px;line-height:33px;height:33px;color:#000;white-space:pre;font-weight:bold;left:626.00px;transform:scaleX(0.9815);transform-origin:0 0;">Earthwork Items</div>
<div style="left:616.5px;top:530.5px;width:548px;height:3px;background:#a3a3a3;"></div>
<div style="left:581px;top:585.74px;width:3612px;height:107.24px;background:#f0f0f0;"></div>
<div style="left:3932px;top:585.74px;width:241px;height:107.24px;background:#fff;"></div>
<div style="top:596.51px;font-size:33px;line-height:33px;height:33px;color:#000;white-space:pre;left:626.00px;transform:scaleX(0.9444);transform-origin:0 0;">101</div>
<div style="top:647.41px;font-size:33px;line-height:33px;height:33px;color:#000;white-space:pre;left:626.00px;transform:scaleX(0.9791);transform-origin:0 0;">Box out excavation</div>
<div style="top:596.51px;font-size:33px;line-height:33px;height:33px;color:#000;white-space:pre;right:336.00px;">1,374.59</div>
<div style="top:596.51px;font-size:33px;line-height:33px;height:33px;color:#000;white-space:pre;right:95.50px;">1.40</div>
<div style="left:616.5px;top:637.74px;width:548px;height:3px;background:#a3a3a3;"></div>
<div style="left:581px;top:692.98px;width:3612px;height:107.24px;background:#f0f0f0;"></div>
<div style="left:3932px;top:692.98px;width:241px;height:107.24px;background:#fff;"></div>
<div style="top:703.75px;font-size:33px;line-height:33px;height:33px;color:#000;white-space:pre;left:626.00px;transform:scaleX(0.9709);transform-origin:0 0;">201.01</div>
<div style="top:754.65px;font-size:33px;line-height:33px;height:33px;color:#000;white-space:pre;left:626.00px;transform:scaleX(0.9724);transform-origin:0 0;">8in SDR 35 PVC</div>
<div style="top:703.75px;font-size:33px;line-height:33px;height:33px;color:#000;white-space:pre;right:336.00px;">2,896.22</div>
<div style="top:703.75px;font-size:33px;line-height:33px;height:33px;color:#000;white-space:pre;right:95.50px;">5.35</div>
<div style="left:616.5px;top:744.98px;width:548px;height:3px;background:#a3a3a3;"></div>
<div style="left:581px;top:800.22px;width:3612px;height:107.24px;background:#f0f0f0;"></div>
<div style="left:615px;top:800.22px;width:3578px;height:107.24px;background:#f5deb3;"></div>
<div style="left:3932px;top:800.22px;width:241px;height:107.24px;background:#fff;"></div>
<div style="top:810.99px;font-size:33px;line-height:33px;height:33px;color:#000;white-space:pre;left:626.00px;transform:scaleX(0.9908);transform-origin:0 0;">301.05</div>
<div style="top:861.89px;font-size:33px;line-height:33px;height:33px;color:#000;white-space:pre;left:626.00px;transform:scaleX(0.9825);transform-origin:0 0;">Subbase</div>
<div style="top:810.99px;font-size:33px;line-height:33px;height:33px;color:#000;white-space:pre;right:336.00px;">241.54</div>
<div style="top:810.99px;font-size:33px;line-height:33px;height:33px;color:#000;white-space:pre;right:95.50px;">1.58</div>
<div style="left:616.5px;top:852.22px;width:548px;height:3px;background:#a3a3a3;"></div>
<div style="left:581px;top:907.46px;width:3612px;height:107.24px;background:#f0f0f0;"></div>
<div style="top:918.23px;font-size:33px;line-height:33px;height:33px;color:#000;white-space:pre;font-weight:bold;left:626.00px;transform:scaleX(0.9357);transform-origin:0 0;">SUBTOTAL 1</div>
<div style="top:969.13px;font-size:33px;line-height:33px;height:33px;color:#000;white-space:pre;font-weight:bold;left:626.00px;transform:scaleX(0.9815);transform-origin:0 0;">Earthwork Items</div>
<div style="top:918.23px;font-size:33px;line-height:33px;height:33px;color:#000;white-space:pre;font-weight:bold;right:336.00px;">4,512.35</div>
<div style="left:616.5px;top:959.46px;width:548px;height:3px;background:#a3a3a3;"></div>
<div style="left:581px;top:1014.7px;width:3612px;height:107.24px;background:#f0f0f0;"></div>
<div style="top:1025.47px;font-size:33px;line-height:33px;height:33px;color:#000;white-space:pre;font-weight:bold;left:626.00px;transform:scaleX(0.9472);transform-origin:0 0;">SECTION 2</div>
<div style="top:1076.37px;font-size:33px;line-height:33px;height:33px;color:#000;white-space:pre;font-weight:bold;left:626.00px;transform:scaleX(0.9566);transform-origin:0 0;">Asphalt Items</div>
<div style="left:616.5px;top:1066.7px;width:548px;height:3px;background:#a3a3a3;"></div>
<div style="left:581px;top:1121.94px;width:3612px;height:107.24px;background:#f0f0f0;"></div>
<div style="left:615px;top:1121.94px;width:3578px;height:107.24px;background:#90ee90;"></div>
<div style="left:3932px;top:1121.94px;width:241px;height:107.24px;background:#fff;"></div>
<div style="top:1132.71px;font-size:33px;line-height:33px;height:33px;color:#808080;white-space:pre;left:626.00px;transform:scaleX(0.9709);transform-origin:0 0;">401.01</div>
<div style="top:1183.61px;font-size:33px;line-height:33px;height:33px;color:#808080;white-space:pre;left:626.00px;transform:scaleX(0.9874);transform-origin:0 0;">Base Asphalt</div>
<div style="top:1132.71px;font-size:33px;line-height:33px;height:33px;color:#808080;white-space:pre;right:3117.00px;">TON</div>
<div style="top:1132.71px;font-size:33px;line-height:33px;height:33px;color:#808080;white-space:pre;right:336.00px;">83.24</div>
<div style="top:1132.71px;font-size:33px;line-height:33px;height:33px;color:#808080;white-space:pre;right:95.50px;">4.32</div>
<div style="left:616.5px;top:1173.94px;width:548px;height:3px;background:#a3a3a3;"></div>
<div style="left:581px;top:1229.18px;width:3612px;height:107.24px;background:#f0f0f0;"></div>
<div style="left:3932px;top:1229.18px;width:241px;height:107.24px;background:#fff;"></div>
<div style="top:1239.95px;font-size:33px;line-height:33px;height:33px;color:#000;white-space:pre;left:626.00px;transform:scaleX(0.9709);transform-origin:0 0;">501.01</div>
<div style="top:1290.85px;font-size:33px;line-height:33px;height:33px;color:#000;white-space:pre;left:626.00px;transform:scaleX(0.9966);transform-origin:0 0;">Top Asphalt Course</div>
<div style="top:1239.95px;font-size:33px;line-height:33px;height:33px;color:#000;white-space:pre;right:3117.00px;">TON</div>
<div style="top:1239.95px;font-size:33px;line-height:33px;height:33px;color:#000;white-space:pre;right:336.00px;">222.96</div>
<div style="top:1239.95px;font-size:33px;line-height:33px;height:33px;color:#000;white-space:pre;right:95.50px;">19.77</div>
<div style="left:616.5px;top:1281.18px;width:548px;height:3px;background:#a3a3a3;"></div>
<div style="left:581px;top:1336.42px;width:3612px;height:107.24px;background:#f0f0f0;"></div>
<div style="top:1347.19px;font-size:33px;line-height:33px;height:33px;color:#000;white-space:pre;font-weight:bold;left:626.00px;transform:scaleX(0.9504);transform-origin:0 0;">SUBTOTAL 2</div>
<div style="top:1398.09px;font-size:33px;line-height:33px;height:33px;color:#000;white-space:pre;font-weight:bold;left:626.00px;transform:scaleX(0.9566);transform-origin:0 0;">Asphalt Items</div>
<div style="top:1347.19px;font-size:33px;line-height:33px;height:33px;color:#000;white-space:pre;font-weight:bold;right:336.00px;">222.96</div>
<div style="left:616.5px;top:1388.42px;width:548px;height:3px;background:#a3a3a3;"></div>
<div style="left:581px;top:1443.66px;width:3612px;height:107.24px;background:#f0f0f0;"></div>
<div style="left:615px;top:1443.66px;width:3578px;height:107.24px;background:#b0c4de;"></div>
<div style="left:3932px;top:1443.66px;width:241px;height:107.24px;background:#fff;"></div>
<div style="top:1454.43px;font-size:33px;line-height:33px;height:33px;color:#000;white-space:pre;left:626.00px;transform:scaleX(0.9808);transform-origin:0 0;">600</div>
<div style="top:1505.33px;font-size:33px;line-height:33px;height:33px;color:#000;white-space:pre;left:626.00px;transform:scaleX(0.9841);transform-origin:0 0;">Fixed price Item</div>
<div style="top:1454.43px;font-size:33px;line-height:33px;height:33px;color:#000;white-space:pre;right:3099.50px;">Fixed Price</div>
<div style="top:1454.43px;font-size:33px;line-height:33px;height:33px;color:#000;white-space:pre;right:336.00px;">0.00</div>
<div style="top:1454.43px;font-size:33px;line-height:33px;height:33px;color:#000;white-space:pre;right:95.50px;">0.00</div>
<div style="left:616.5px;top:1495.66px;width:548px;height:3px;background:#a3a3a3;"></div>
<div style="left:613.2px;top:479px;width:3.6px;height:1073.7px;background:#a3a3a3;"></div>
<div style="left:1163.2px;top:479px;width:3.6px;height:1073.7px;background:#3b4b7c;"></div>
<div style="left:1404.2px;top:479px;width:3.6px;height:1073.7px;background:#3b4b7c;"></div>
<div style="left:1685.2px;top:479px;width:3.6px;height:1073.7px;background:#a3a3a3;"></div>
<div style="left:1928.2px;top:479px;width:3.6px;height:1073.7px;background:#a3a3a3;"></div>
<div style="left:1989.2px;top:479px;width:3.6px;height:1073.7px;background:#a3a3a3;"></div>
<div style="left:2230.2px;top:479px;width:3.6px;height:1073.7px;background:#a3a3a3;"></div>
<div style="left:2418.2px;top:479px;width:3.6px;height:1073.7px;background:#a3a3a3;"></div>
<div style="left:2678.2px;top:479px;width:3.6px;height:1073.7px;background:#a3a3a3;"></div>
<div style="left:2857.2px;top:479px;width:3.6px;height:1073.7px;background:#a3a3a3;"></div>
<div style="left:3099.2px;top:479px;width:3.6px;height:1073.7px;background:#a3a3a3;"></div>
<div style="left:3153.2px;top:479px;width:3.6px;height:1073.7px;background:#a3a3a3;"></div>
<div style="left:3394.2px;top:479px;width:3.6px;height:1073.7px;background:#a3a3a3;"></div>
<div style="left:3635.2px;top:479px;width:3.6px;height:1073.7px;background:#a3a3a3;"></div>
<div style="left:3689.2px;top:479px;width:3.6px;height:1073.7px;background:#a3a3a3;"></div>
<div style="left:3930.2px;top:479px;width:3.6px;height:1073.7px;background:#a3a3a3;"></div>
<div style="left:4171.2px;top:479px;width:3.6px;height:1073.7px;background:#a3a3a3;"></div>
<div style="left:581px;top:584.04px;width:826.8px;height:3.4px;background:#3b4b7c;"></div>
<div style="left:1407.8px;top:583.94px;width:2785.2px;height:3.6px;background:#a3a3a3;"></div>
<div style="left:581px;top:691.28px;width:826.8px;height:3.4px;background:#3b4b7c;"></div>
<div style="left:1407.8px;top:691.18px;width:2785.2px;height:3.6px;background:#a3a3a3;"></div>
<div style="left:581px;top:798.52px;width:826.8px;height:3.4px;background:#3b4b7c;"></div>
<div style="left:1407.8px;top:798.42px;width:2785.2px;height:3.6px;background:#a3a3a3;"></div>
<div style="left:581px;top:905.76px;width:826.8px;height:3.4px;background:#3b4b7c;"></div>
<div style="left:1407.8px;top:905.66px;width:2785.2px;height:3.6px;background:#a3a3a3;"></div>
<div style="left:581px;top:1013px;width:826.8px;height:3.4px;background:#3b4b7c;"></div>
<div style="left:1407.8px;top:1012.9px;width:2785.2px;height:3.6px;background:#a3a3a3;"></div>
<div style="left:581px;top:1120.24px;width:826.8px;height:3.4px;background:#3b4b7c;"></div>
<div style="left:1407.8px;top:1120.14px;width:2785.2px;height:3.6px;background:#a3a3a3;"></div>
<div style="left:581px;top:1227.48px;width:826.8px;height:3.4px;background:#3b4b7c;"></div>
<div style="left:1407.8px;top:1227.38px;width:2785.2px;height:3.6px;background:#a3a3a3;"></div>
<div style="left:581px;top:1334.72px;width:826.8px;height:3.4px;background:#3b4b7c;"></div>
<div style="left:1407.8px;top:1334.62px;width:2785.2px;height:3.6px;background:#a3a3a3;"></div>
<div style="left:581px;top:1441.96px;width:826.8px;height:3.4px;background:#3b4b7c;"></div>
<div style="left:1407.8px;top:1441.86px;width:2785.2px;height:3.6px;background:#a3a3a3;"></div>
<div style="left:581px;top:1549.2px;width:826.8px;height:3.4px;background:#3b4b7c;"></div>
<div style="left:1407.8px;top:1549.1px;width:2785.2px;height:3.6px;background:#a3a3a3;"></div>
<svg style="left:592px;top:517px" width="18" height="32" viewBox="0 0 18 32"><path d="M0 0L18 16L0 32Z" fill="#000"/></svg>
<div style="left:1684px;top:481.5px;width:7px;height:103px;background:#f0f0f0;"></div>
<div style="left:1926.5px;top:481.5px;width:7px;height:103px;background:#f0f0f0;"></div>
<svg style="left:1686px;top:480px" width="246" height="108" viewBox="0 0 246 108"><rect x="4.2" y="4" width="237.2" height="99.5" fill="none" stroke="#6a6a6a" stroke-width="3" stroke-dasharray="5.6 3.6"/></svg>
<div style="left:613.5px;top:346px;width:3px;height:131px;background:#6a6a6a;"></div>
<div style="left:616.5px;top:346px;width:1.5px;height:131px;background:#fff;"></div>
<div style="left:1163.5px;top:346px;width:3px;height:131px;background:#6a6a6a;"></div>
<div style="left:1166.5px;top:346px;width:1.5px;height:131px;background:#fff;"></div>
<div style="left:1404.5px;top:346px;width:3px;height:131px;background:#6a6a6a;"></div>
<div style="left:1407.5px;top:346px;width:1.5px;height:131px;background:#fff;"></div>
<div style="left:1685.5px;top:346px;width:3px;height:131px;background:#6a6a6a;"></div>
<div style="left:1688.5px;top:346px;width:1.5px;height:131px;background:#fff;"></div>
<div style="left:1928.5px;top:346px;width:3px;height:131px;background:#6a6a6a;"></div>
<div style="left:1931.5px;top:346px;width:1.5px;height:131px;background:#fff;"></div>
<div style="left:1989.5px;top:346px;width:3px;height:131px;background:#6a6a6a;"></div>
<div style="left:1992.5px;top:346px;width:1.5px;height:131px;background:#fff;"></div>
<div style="left:2230.5px;top:346px;width:3px;height:131px;background:#6a6a6a;"></div>
<div style="left:2233.5px;top:346px;width:1.5px;height:131px;background:#fff;"></div>
<div style="left:2418.5px;top:346px;width:3px;height:131px;background:#6a6a6a;"></div>
<div style="left:2421.5px;top:346px;width:1.5px;height:131px;background:#fff;"></div>
<div style="left:2678.5px;top:346px;width:3px;height:131px;background:#6a6a6a;"></div>
<div style="left:2681.5px;top:346px;width:1.5px;height:131px;background:#fff;"></div>
<div style="left:2857.5px;top:346px;width:3px;height:131px;background:#6a6a6a;"></div>
<div style="left:2860.5px;top:346px;width:1.5px;height:131px;background:#fff;"></div>
<div style="left:3099.5px;top:346px;width:3px;height:131px;background:#6a6a6a;"></div>
<div style="left:3102.5px;top:346px;width:1.5px;height:131px;background:#fff;"></div>
<div style="left:3153.5px;top:346px;width:3px;height:131px;background:#6a6a6a;"></div>
<div style="left:3156.5px;top:346px;width:1.5px;height:131px;background:#fff;"></div>
<div style="left:3394.5px;top:346px;width:3px;height:131px;background:#6a6a6a;"></div>
<div style="left:3397.5px;top:346px;width:1.5px;height:131px;background:#fff;"></div>
<div style="left:3635.5px;top:346px;width:3px;height:131px;background:#6a6a6a;"></div>
<div style="left:3638.5px;top:346px;width:1.5px;height:131px;background:#fff;"></div>
<div style="left:3689.5px;top:346px;width:3px;height:131px;background:#6a6a6a;"></div>
<div style="left:3692.5px;top:346px;width:1.5px;height:131px;background:#fff;"></div>
<div style="left:3930.5px;top:346px;width:3px;height:131px;background:#6a6a6a;"></div>
<div style="left:3933.5px;top:346px;width:1.5px;height:131px;background:#fff;"></div>
<div style="left:4171.5px;top:346px;width:3px;height:131px;background:#6a6a6a;"></div>
<div style="left:4174.5px;top:346px;width:1.5px;height:131px;background:#fff;"></div>
<div style="left:581px;top:476.5px;width:3612px;height:2px;background:#8a8a8a;"></div>
<div style="left:581px;top:478.5px;width:3612px;height:2.5px;background:#585858;"></div>
<div style="top:398.17px;font-size:33px;line-height:33px;height:33px;color:#000;white-space:pre;font-weight:bold;left:790.15px;width:201.71px;transform:scaleX(0.9801);transform-origin:50% 0;">Item Number</div>
<div style="top:373.87px;font-size:33px;line-height:33px;height:33px;color:#000;white-space:pre;font-weight:bold;left:1218.66px;width:135.67px;transform:scaleX(0.9287);transform-origin:50% 0;">Bid Qty /</div>
<div style="top:411.37px;font-size:33px;line-height:33px;height:33px;color:#000;white-space:pre;font-weight:bold;left:1196.96px;width:179.08px;transform:scaleX(0.9604);transform-origin:50% 0;">Takeoff Qty</div>
<div style="top:373.87px;font-size:33px;line-height:33px;height:33px;color:#000;white-space:pre;font-weight:bold;left:1462.24px;width:170.53px;transform:scaleX(0.9676);transform-origin:50% 0;">Calc. Unit /</div>
<div style="top:411.37px;font-size:33px;line-height:33px;height:33px;color:#000;white-space:pre;font-weight:bold;left:1474.18px;width:146.65px;transform:scaleX(0.9683);transform-origin:50% 0;">Unit Cost</div>
<div style="top:398.17px;font-size:33px;line-height:33px;height:33px;color:#000;white-space:pre;font-weight:bold;left:1746.26px;width:126.47px;transform:scaleX(0.9488);transform-origin:50% 0;">Bid Unit</div>
<div style="top:373.87px;font-size:33px;line-height:33px;height:33px;color:#000;white-space:pre;font-weight:bold;left:2038.56px;width:147.87px;transform:scaleX(0.9400);transform-origin:50% 0;">Total Bid/</div>
<div style="top:411.37px;font-size:33px;line-height:33px;height:33px;color:#000;white-space:pre;font-weight:bold;left:2033.06px;width:158.88px;transform:scaleX(0.9567);transform-origin:50% 0;">Total Cost</div>
<div style="top:398.17px;font-size:33px;line-height:33px;height:33px;color:#000;white-space:pre;font-weight:bold;left:2249.07px;width:155.86px;transform:scaleX(0.9688);transform-origin:50% 0;">Markup %</div>
<div style="top:373.87px;font-size:33px;line-height:33px;height:33px;color:#000;white-space:pre;font-weight:bold;left:2456.55px;width:188.90px;transform:scaleX(0.9794);transform-origin:50% 0;">Item Spread</div>
<div style="top:411.37px;font-size:33px;line-height:33px;height:33px;color:#000;white-space:pre;font-weight:bold;left:2468.42px;width:165.16px;transform:scaleX(0.9869);transform-origin:50% 0;">$63,538.91</div>
<div style="top:373.87px;font-size:33px;line-height:33px;height:33px;color:#000;white-space:pre;font-weight:bold;left:2732.92px;width:75.17px;transform:scaleX(0.9578);transform-origin:50% 0;">Print</div>
<div style="top:411.37px;font-size:33px;line-height:33px;height:33px;color:#000;white-space:pre;font-weight:bold;left:2704.51px;width:131.98px;transform:scaleX(0.9395);transform-origin:50% 0;">Subtotal</div>
<div style="top:373.87px;font-size:33px;line-height:33px;height:33px;color:#000;white-space:pre;font-weight:bold;left:2935.17px;width:91.67px;transform:scaleX(0.9600);transform-origin:50% 0;">Labor</div>
<div style="top:411.37px;font-size:33px;line-height:33px;height:33px;color:#000;white-space:pre;font-weight:bold;left:2948.93px;width:64.15px;transform:scaleX(0.9665);transform-origin:50% 0;">Unit</div>
<div style="top:373.87px;font-size:33px;line-height:33px;height:33px;color:#000;white-space:pre;font-weight:bold;left:3194.00px;width:165.00px;transform:scaleX(0.9636);transform-origin:50% 0;">Labor Amt</div>
<div style="top:411.37px;font-size:33px;line-height:33px;height:33px;color:#000;white-space:pre;font-weight:bold;left:3193.92px;width:165.16px;transform:scaleX(0.9990);transform-origin:50% 0;">$39,038.83</div>
<div style="top:373.87px;font-size:33px;line-height:33px;height:33px;color:#000;white-space:pre;font-weight:bold;left:3432.25px;width:170.49px;transform:scaleX(0.9619);transform-origin:50% 0;">Equipment</div>
<div style="top:411.37px;font-size:33px;line-height:33px;height:33px;color:#000;white-space:pre;font-weight:bold;left:3485.43px;width:64.15px;transform:scaleX(0.9665);transform-origin:50% 0;">Unit</div>
<div style="top:373.87px;font-size:33px;line-height:33px;height:33px;color:#000;white-space:pre;font-weight:bold;left:3710.75px;width:203.49px;transform:scaleX(0.9533);transform-origin:50% 0;">Equipment A</div>
<div style="top:411.37px;font-size:33px;line-height:33px;height:33px;color:#000;white-space:pre;font-weight:bold;left:3739.10px;width:146.81px;transform:scaleX(0.9945);transform-origin:50% 0;">$4,735.31</div>
<div style="top:373.87px;font-size:33px;line-height:33px;height:33px;color:#000;white-space:pre;font-weight:bold;left:4003.07px;width:100.85px;transform:scaleX(0.9816);transform-origin:50% 0;">Rental</div>
<div style="top:411.37px;font-size:33px;line-height:33px;height:33px;color:#000;white-space:pre;font-weight:bold;left:4021.43px;width:64.15px;transform:scaleX(0.9665);transform-origin:50% 0;">Unit</div>
<div style="left:577px;top:2123px;width:3664px;height:266px;background:#f0f0f0;border-top:4px solid #747474;border-left:4px solid #747474;border-bottom:4px solid #ffffff;border-right:4px solid #ffffff;"></div>
<div style="top:2141.76px;font-size:31px;line-height:31px;height:31px;color:#000;white-space:pre;font-weight:bold;left:1397.67px;width:132.66px;transform:scaleX(0.9950);transform-origin:50% 0;">Base Bid</div>
<div style="top:2141.76px;font-size:31px;line-height:31px;height:31px;color:#000;white-space:pre;font-weight:bold;left:4009.85px;width:130.30px;transform:scaleX(0.9977);transform-origin:50% 0;">Total Bid</div>
<div style="top:2204.76px;font-size:31px;line-height:31px;height:31px;color:#000;white-space:pre;font-weight:bold;right:2967.00px;transform:scaleX(0.9863);transform-origin:100% 0;">ACTUAL BID:</div>
<div style="top:2268.76px;font-size:31px;line-height:31px;height:31px;color:#000;white-space:pre;font-weight:bold;right:2967.00px;transform:scaleX(0.9786);transform-origin:100% 0;">BALANCED BID:</div>
<div style="top:2337.76px;font-size:31px;line-height:31px;height:31px;color:#000;white-space:pre;font-weight:bold;right:2967.00px;transform:scaleX(0.9824);transform-origin:100% 0;">UNBALANCED:</div>
<div style="left:1320px;top:2191px;width:304px;height:187px;background:#f0f0f0;border:2px solid #555;"></div>
<div style="left:1321px;top:2311.5px;width:302px;height:5px;background:#000;"></div>
<div style="top:2205.91px;font-size:32px;line-height:32px;height:32px;color:#0000ff;white-space:pre;font-weight:bold;right:2658.00px;transform:scaleX(1.0003);transform-origin:100% 0;">$212,693.82</div>
<div style="top:2265.91px;font-size:32px;line-height:32px;height:32px;color:#000;white-space:pre;font-weight:bold;right:2658.00px;transform:scaleX(1.0003);transform-origin:100% 0;">$198,075.12</div>
<div style="top:2330.91px;font-size:32px;line-height:32px;height:32px;color:#008000;white-space:pre;font-weight:bold;right:2658.00px;transform:scaleX(1.0115);transform-origin:100% 0;">$14,618.70</div>
<div style="left:1639px;top:2191px;width:304px;height:187px;background:#b0c4de;border:2px solid #555;"></div>
<div style="left:1640px;top:2308.5px;width:302px;height:5px;background:#000;"></div>
<div style="top:2205.91px;font-size:32px;line-height:32px;height:32px;color:#0000ff;white-space:pre;font-weight:bold;right:2339.00px;transform:scaleX(1.0028);transform-origin:100% 0;">$300.00</div>
<div style="top:2261.91px;font-size:32px;line-height:32px;height:32px;color:#000;white-space:pre;font-weight:bold;right:2339.00px;transform:scaleX(1.0240);transform-origin:100% 0;">$0.00</div>
<div style="top:2328.91px;font-size:32px;line-height:32px;height:32px;color:#008000;white-space:pre;font-weight:bold;right:2339.00px;transform:scaleX(1.0028);transform-origin:100% 0;">$300.00</div>
<div style="left:1958px;top:2191px;width:304px;height:187px;background:#f5deb3;border:2px solid #555;"></div>
<div style="left:1959px;top:2308.5px;width:302px;height:5px;background:#000;"></div>
<div style="top:2205.91px;font-size:32px;line-height:32px;height:32px;color:#0000ff;white-space:pre;font-weight:bold;right:2019.50px;transform:scaleX(1.0115);transform-origin:100% 0;">$53,935.00</div>
<div style="top:2261.91px;font-size:32px;line-height:32px;height:32px;color:#000;white-space:pre;font-weight:bold;right:2019.50px;transform:scaleX(1.0115);transform-origin:100% 0;">$55,763.83</div>
<div style="top:2328.91px;font-size:32px;line-height:32px;height:32px;color:#ff0000;white-space:pre;font-weight:bold;right:2019.50px;transform:scaleX(1.0130);transform-origin:100% 0;">-$1,828.83</div>
<div style="left:2277px;top:2191px;width:304px;height:187px;background:#90ee90;border:2px solid #555;"></div>
<div style="top:2260.76px;font-size:31px;line-height:31px;height:31px;color:#000;white-space:pre;font-weight:bold;left:2392.28px;width:115.45px;transform:scaleX(0.9788);transform-origin:50% 0;">Inactive</div>
<div style="left:3927px;top:2191px;width:305.5px;height:187px;background:#fff;border:2px solid #555;"></div>
<div style="left:3928px;top:2311.5px;width:303.5px;height:5px;background:#000;"></div>
<div style="top:2205.91px;font-size:32px;line-height:32px;height:32px;color:#0000ff;white-space:pre;font-weight:bold;right:50.50px;transform:scaleX(1.0003);transform-origin:100% 0;">$266,928.82</div>
<div style="top:2265.91px;font-size:32px;line-height:32px;height:32px;color:#000;white-space:pre;font-weight:bold;right:50.50px;transform:scaleX(1.0003);transform-origin:100% 0;">$253,838.95</div>
<div style="top:2330.91px;font-size:32px;line-height:32px;height:32px;color:#008000;white-space:pre;font-weight:bold;right:50.50px;transform:scaleX(1.0115);transform-origin:100% 0;">$13,089.87</div>
<div style="left:1651.5px;top:2140px;width:33.5px;height:33px;background:#fff;border-top:4px solid #6e6e6e;border-left:4px solid #6e6e6e;border-bottom:3px solid #fafafa;border-right:3px solid #fafafa;"></div>
<svg style="left:1658px;top:2146px" width="24" height="24" viewBox="0 0 24 24"><path d="M2 9L8.5 16L21.5 2.5V9.5L8.5 23L2 16Z" fill="#000"/></svg>
<div style="top:2141.76px;font-size:31px;line-height:31px;height:31px;color:#000;white-space:pre;font-weight:bold;left:1700.00px;transform:scaleX(0.9805);transform-origin:0 0;">Alternate #1</div>
<div style="left:1965.5px;top:2140px;width:33.5px;height:33px;background:#fff;border-top:4px solid #6e6e6e;border-left:4px solid #6e6e6e;border-bottom:3px solid #fafafa;border-right:3px solid #fafafa;"></div>
<svg style="left:1972px;top:2146px" width="24" height="24" viewBox="0 0 24 24"><path d="M2 9L8.5 16L21.5 2.5V9.5L8.5 23L2 16Z" fill="#000"/></svg>
<div style="top:2141.76px;font-size:31px;line-height:31px;height:31px;color:#000;white-space:pre;font-weight:bold;left:2014.00px;transform:scaleX(0.9749);transform-origin:0 0;">Alternates 2</div>
<div style="left:2284.5px;top:2140px;width:33.5px;height:33px;background:#fff;border-top:4px solid #6e6e6e;border-left:4px solid #6e6e6e;border-bottom:3px solid #fafafa;border-right:3px solid #fafafa;"></div>
<div style="top:2141.76px;font-size:31px;line-height:31px;height:31px;color:#000;white-space:pre;font-weight:bold;left:2332.00px;transform:scaleX(0.9805);transform-origin:0 0;">Alternate #3</div>
<div style="left:0px;top:2400px;width:4258px;height:75px;background:#f0f0f0;"></div>
<div style="left:0px;top:2401px;width:4258px;height:4.5px;background:#656565;"></div>
<div style="left:0px;top:2405.5px;width:4258px;height:3.5px;background:#fbfbfb;"></div>
<div style="left:0px;top:2410.5px;width:132.5px;height:64.5px;background:#f0f0f0;border-top:2.5px solid #fff;border-left:2.5px solid #fff;border-right:3.5px solid #9c9c9c;border-bottom:3.5px solid #9c9c9c;"></div>
<div style="top:2426.27px;font-size:31px;line-height:31px;height:31px;color:#000;white-space:pre;font-family:'DejaVu Sans Condensed', 'DejaVu Sans', sans-serif;font-weight:bold;left:30.97px;width:72.55px;transform:scaleX(1.0241);transform-origin:50% 0;text-decoration-thickness:3px;text-underline-offset:3px;"><u>R</u>ate</div>
<div style="left:139px;top:2410.5px;width:133.5px;height:64.5px;background:#f0f0f0;border-top:2.5px solid #fff;border-left:2.5px solid #fff;border-right:3.5px solid #9c9c9c;border-bottom:3.5px solid #9c9c9c;"></div>
<div style="top:2426.27px;font-size:31px;line-height:31px;height:31px;color:#000;white-space:pre;font-family:'DejaVu Sans Condensed', 'DejaVu Sans', sans-serif;font-weight:bold;left:170.91px;width:71.69px;transform:scaleX(1.0769);transform-origin:50% 0;text-decoration-thickness:3px;text-underline-offset:3px;"><u>I</u>tem</div>
<div style="left:279px;top:2410.5px;width:104.5px;height:64.5px;background:#f2f2f2;border-top:3px solid #9a9a9a;border-left:3px solid #9a9a9a;border-right:3px solid #fff;border-bottom:3px solid #fff;"></div>
<div style="top:2426.27px;font-size:31px;line-height:31px;height:31px;color:#000;white-space:pre;font-family:'DejaVu Sans Condensed', 'DejaVu Sans', sans-serif;font-weight:bold;left:306.87px;width:50.77px;transform:scaleX(1.0006);transform-origin:50% 0;text-decoration-thickness:3px;text-underline-offset:3px;"><u>B</u>id</div>
<div style="left:392px;top:2410.5px;width:127px;height:64.5px;background:#f0f0f0;border-top:2.5px solid #fff;border-left:2.5px solid #fff;border-right:3.5px solid #9c9c9c;border-bottom:3.5px solid #9c9c9c;"></div>
<div style="top:2426.27px;font-size:31px;line-height:31px;height:31px;color:#000;white-space:pre;font-family:'DejaVu Sans Condensed', 'DejaVu Sans', sans-serif;font-weight:bold;left:422.34px;width:68.31px;transform:scaleX(1.0701);transform-origin:50% 0;text-decoration-thickness:3px;text-underline-offset:3px;"><u>S</u>MC</div>
<div style="left:526px;top:2410.5px;width:121px;height:64.5px;background:#f0f0f0;border-top:2.5px solid #fff;border-left:2.5px solid #fff;border-right:3.5px solid #9c9c9c;border-bottom:3.5px solid #9c9c9c;"></div>
<div style="top:2426.27px;font-size:31px;line-height:31px;height:31px;color:#000;white-space:pre;font-family:'DejaVu Sans Condensed', 'DejaVu Sans', sans-serif;font-weight:bold;left:557.71px;width:59.58px;transform:scaleX(1.0675);transform-origin:50% 0;text-decoration-thickness:3px;text-underline-offset:3px;">R<u>T</u>C</div>
<div style="left:655px;top:2410.5px;width:139px;height:64.5px;background:#f0f0f0;border-top:2.5px solid #fff;border-left:2.5px solid #fff;border-right:3.5px solid #9c9c9c;border-bottom:3.5px solid #9c9c9c;"></div>
<div style="top:2426.27px;font-size:31px;line-height:31px;height:31px;color:#000;white-space:pre;font-family:'DejaVu Sans Condensed', 'DejaVu Sans', sans-serif;font-weight:bold;left:684.28px;width:82.45px;transform:scaleX(1.0127);transform-origin:50% 0;text-decoration-thickness:3px;text-underline-offset:3px;"><u>O</u>pen</div>
<div style="left:801px;top:2410.5px;width:141px;height:64.5px;background:#f0f0f0;border-top:2.5px solid #fff;border-left:2.5px solid #fff;border-right:3.5px solid #9c9c9c;border-bottom:3.5px solid #9c9c9c;"></div>
<div style="top:2426.27px;font-size:31px;line-height:31px;height:31px;color:#000;white-space:pre;font-family:'DejaVu Sans Condensed', 'DejaVu Sans', sans-serif;font-weight:bold;left:830.15px;width:84.71px;transform:scaleX(1.0153);transform-origin:50% 0;text-decoration-thickness:3px;text-underline-offset:3px;">C<u>l</u>ose</div>
<div style="left:949px;top:2410.5px;width:117px;height:64.5px;background:#f0f0f0;border-top:2.5px solid #fff;border-left:2.5px solid #fff;border-right:3.5px solid #9c9c9c;border-bottom:3.5px solid #9c9c9c;"></div>
<div style="top:2426.27px;font-size:31px;line-height:31px;height:31px;color:#000;white-space:pre;font-family:'DejaVu Sans Condensed', 'DejaVu Sans', sans-serif;font-weight:bold;left:978.54px;width:59.93px;transform:scaleX(1.0012);transform-origin:50% 0;text-decoration-thickness:3px;text-underline-offset:3px;">E<u>x</u>it</div>
<div style="left:1069px;top:2410.5px;width:1016px;height:64.5px;background:#f0f0f0;border-top:3px solid #a0a0a0;border-left:3.5px solid #a0a0a0;border-right:3px solid #fff;border-bottom:3px solid #fff;"></div>
<div style="top:2427.76px;font-size:31px;line-height:31px;height:31px;color:#000;white-space:pre;left:1079.00px;transform:scaleX(1.0277);transform-origin:0 0;">KWV Co.</div>
<div style="left:2093px;top:2410.5px;width:1355px;height:64.5px;background:#f0f0f0;border-top:3px solid #a0a0a0;border-left:3.5px solid #a0a0a0;border-right:3px solid #fff;border-bottom:3px solid #fff;"></div>
<div style="top:2428.61px;font-size:30px;line-height:30px;height:30px;color:#000;white-space:pre;left:2102.00px;transform:scaleX(0.9727);transform-origin:0 0;">Project: MAIN_ST</div>
<div style="left:3456px;top:2410.5px;width:802px;height:64.5px;background:#f0f0f0;border-top:3px solid #a0a0a0;border-left:3.5px solid #a0a0a0;border-right:3px solid #fff;border-bottom:3px solid #fff;"></div>
<svg style="left:4218px;top:2435px" width="40" height="40" viewBox="0 0 40 40" stroke="#808080" stroke-width="3"><path d="M6 40L40 6M18 40L40 18M30 40L40 30"/></svg>
<div style="left:0;top:0;width:4258px;height:2.4px;background:#181818"></div>
<svg style="left:0;top:0" width="4258" height="2475" viewBox="0 0 4258 2475"><path d="M0 0H14A14 14 0 0 0 0 14Z" fill="#000"/><path d="M4258 0H4237A21 21 0 0 1 4258 21Z" fill="#000"/><path d="M0 2475H14A14 14 0 0 1 0 2461Z" fill="#000"/></svg>
<div style="left:1091px;top:594px;width:2626px;height:1170px;background:#808080;box-shadow:22px 30px 80px rgba(0,0,0,.55);border-radius:4px;"></div>
<div style="left:1101px;top:604px;width:2606px;height:113px;background:#fff;"></div>
<div style="left:1101px;top:717px;width:2606px;height:1037px;background:#f0f0f0;"></div>
<svg style="left:1128px;top:620.5px" width="60" height="60" viewBox="0 0 40 40" ><path d="M1.05 20.00L20.00 1.05L38.95 20.00L20.00 38.95Z" fill="#f7d61a"/><path d="M20.00 1.05L38.95 20.00L26.51 32.45L20.00 25.94L25.94 20.00L13.49 7.55Z" fill="#0a0a0a"/><path d="M14.06 20.00L20.00 14.06L25.94 20.00L20.00 25.94Z" fill="#fff"/><path d="M21 38.5H29" stroke="#b8b8b8" stroke-width="1.6"/><circle cx="21.5" cy="37.6" r="1.2" fill="#444"/></svg>
<div style="top:629.52px;font-size:49px;line-height:49px;height:49px;color:#a2a2a2;white-space:pre;left:1212.00px;transform:scaleX(0.9649);transform-origin:0 0;">Current Estimating Link Users</div>
<svg style="left:3638px;top:630px" width="42" height="42" viewBox="0 0 42 42"><path d="M1 1L41 41M41 1L1 41" stroke="#8a8a8a" stroke-width="2.5"/></svg>
<div style="left:1101px;top:737px;width:2606px;height:4px;background:#a0a0a0;"></div>
<div style="left:1101px;top:741px;width:2606px;height:4px;background:#fff;"></div>
<div style="left:1101px;top:1554px;width:2606px;height:8px;background:#fff;"></div>
<div style="left:1101px;top:1562px;width:2606px;height:4.8px;background:#a0a0a0;"></div>
<div style="left:1101px;top:1566.8px;width:2606px;height:4.2px;background:#fff;"></div>
<div style="left:1101px;top:782px;width:4.5px;height:772px;background:#fafafa;"></div>
<div style="left:1105.5px;top:782px;width:2600px;height:772px;background:#fff;border-top:5px solid #a0a0a0;border-left:5px solid #a0a0a0;border-bottom:3px solid #e6e6e6;border-right:3px solid #e6e6e6;"></div>
<div style="left:1110.5px;top:787px;width:2592px;height:764px;background:#fff;border-top:3px solid #696969;border-left:3px solid #696969;"></div>
<div style="left:1113.5px;top:790px;width:2588.5px;height:192px;background:#f0f0f0;"></div>
<div style="left:1113.5px;top:1486px;width:2588.5px;height:65px;background:#f0f0f0;"></div>
<div style="left:1181px;top:1512.5px;width:1507px;height:10.5px;background:#f8f8f8;"></div>
<div style="left:1182px;top:1513.8px;width:1505px;height:8.3px;background:#808080;"></div>
<div style="left:1166px;top:790px;width:4px;height:66px;background:#696969;"></div>
<div style="left:1170px;top:790px;width:2px;height:66px;background:#fff;"></div>
<div style="left:1166px;top:859px;width:4px;height:123px;background:#b2b2b2;"></div>
<div style="left:1470.5px;top:790px;width:4px;height:66px;background:#696969;"></div>
<div style="left:1474.5px;top:790px;width:2px;height:66px;background:#fff;"></div>
<div style="left:1470.5px;top:859px;width:4px;height:123px;background:#b2b2b2;"></div>
<div style="left:1796px;top:790px;width:4px;height:66px;background:#696969;"></div>
<div style="left:1800px;top:790px;width:2px;height:66px;background:#fff;"></div>
<div style="left:1796px;top:859px;width:4px;height:123px;background:#b2b2b2;"></div>
<div style="left:2610px;top:790px;width:4px;height:66px;background:#696969;"></div>
<div style="left:2614px;top:790px;width:2px;height:66px;background:#fff;"></div>
<div style="left:2610px;top:859px;width:4px;height:123px;background:#b2b2b2;"></div>
<div style="left:2834px;top:790px;width:4px;height:66px;background:#696969;"></div>
<div style="left:2838px;top:790px;width:2px;height:66px;background:#fff;"></div>
<div style="left:2834px;top:859px;width:4px;height:123px;background:#b2b2b2;"></div>
<div style="left:3058px;top:790px;width:4px;height:66px;background:#696969;"></div>
<div style="left:3062px;top:790px;width:2px;height:66px;background:#fff;"></div>
<div style="left:3058px;top:859px;width:4px;height:123px;background:#b2b2b2;"></div>
<div style="left:3281px;top:790px;width:4px;height:66px;background:#696969;"></div>
<div style="left:3285px;top:790px;width:2px;height:66px;background:#fff;"></div>
<div style="left:3281px;top:859px;width:4px;height:123px;background:#b2b2b2;"></div>
<div style="left:3504px;top:790px;width:4px;height:66px;background:#696969;"></div>
<div style="left:3508px;top:790px;width:2px;height:66px;background:#fff;"></div>
<div style="left:3504px;top:859px;width:4px;height:123px;background:#b2b2b2;"></div>
<div style="left:1113.5px;top:790px;width:2588.5px;height:2px;background:#fff;"></div>
<div style="left:1113.5px;top:854.5px;width:2588.5px;height:5px;background:#696969;"></div>
<div style="left:1113.5px;top:980.5px;width:2588.5px;height:4.5px;background:#b4b4b4;"></div>
<div style="left:1165.5px;top:859px;width:5px;height:125px;background:#696969;"></div>
<div style="left:1113.5px;top:981.5px;width:57px;height:4px;background:#696969;"></div>
<svg style="left:1129px;top:899.5px" width="26" height="45" viewBox="0 0 26 45"><path d="M0 0L26 22.5L0 45Z" fill="#000"/></svg>
<div style="top:800.82px;font-size:49px;line-height:49px;height:49px;color:#000;white-space:pre;font-weight:bold;left:1197.24px;width:256.03px;transform:scaleX(0.9764);transform-origin:50% 0;">User Name</div>
<div style="top:800.82px;font-size:49px;line-height:49px;height:49px;color:#000;white-space:pre;font-weight:bold;left:1524.52px;width:231.46px;transform:scaleX(0.9613);transform-origin:50% 0;">User Host</div>
<div style="top:800.82px;font-size:49px;line-height:49px;height:49px;color:#000;white-space:pre;font-weight:bold;left:2126.94px;width:166.12px;transform:scaleX(0.9812);transform-origin:50% 0;">Project</div>
<div style="top:800.82px;font-size:49px;line-height:49px;height:49px;color:#000;white-space:pre;font-weight:bold;left:2662.27px;width:133.46px;transform:scaleX(1.0116);transform-origin:50% 0;">Rates</div>
<div style="top:800.82px;font-size:49px;line-height:49px;height:49px;color:#000;white-space:pre;font-weight:bold;left:2889.00px;width:128.00px;transform:scaleX(0.9765);transform-origin:50% 0;">Items</div>
<div style="top:800.82px;font-size:49px;line-height:49px;height:49px;color:#000;white-space:pre;font-weight:bold;left:3137.03px;width:78.93px;transform:scaleX(0.9502);transform-origin:50% 0;">Bid</div>
<div style="top:800.82px;font-size:49px;line-height:49px;height:49px;color:#000;white-space:pre;font-weight:bold;left:3345.06px;width:108.89px;transform:scaleX(1.0010);transform-origin:50% 0;">SMC</div>
<div style="top:800.82px;font-size:49px;line-height:49px;height:49px;color:#000;white-space:pre;font-weight:bold;left:3572.65px;width:100.70px;transform:scaleX(1.0228);transform-origin:50% 0;">RTC</div>
<div style="top:865.66px;font-size:48.6px;line-height:48.6px;height:48.6px;color:#000;white-space:pre;left:1184.50px;transform:scaleX(0.8914);transform-origin:0 0;">Kathleen</div>
<div style="top:861.86px;font-size:48.6px;line-height:48.6px;height:48.6px;color:#000;white-space:pre;left:1489.00px;transform:scaleX(0.9000);transform-origin:0 0;">KWV_WORK</div>
<div style="top:912.86px;font-size:48.6px;line-height:48.6px;height:48.6px;color:#000;white-space:pre;left:1489.00px;transform:scaleX(0.9343);transform-origin:0 0;">STATION</div>
<div style="top:865.66px;font-size:48.6px;line-height:48.6px;height:48.6px;color:#000;white-space:pre;left:1814.00px;transform:scaleX(0.8927);transform-origin:0 0;">MAIN_ST</div>
<div style="left:2699px;top:867px;width:44px;height:44px;background:#fff;border:3px solid #a8a8a8;"></div>
<div style="left:2923px;top:867px;width:44px;height:44px;background:#fff;border:3px solid #a8a8a8;"></div>
<div style="left:3147px;top:867px;width:44px;height:44px;background:#fff;border:3px solid #a8a8a8;"></div>
<svg style="left:3154px;top:875px" width="30" height="30" viewBox="0 0 30 30"><path d="M2 13L11 22L28 3V12L11 31L2 22Z" fill="#000"/></svg>
<div style="left:3370px;top:867px;width:44px;height:44px;background:#fff;border:3px solid #a8a8a8;"></div>
<div style="left:3594px;top:867px;width:44px;height:44px;background:#fff;border:3px solid #a8a8a8;"></div>
<div style="left:2959px;top:1625px;width:338px;height:89px;background:#f0f0f0;border-top:3px solid #fff;border-left:3px solid #fff;border-right:5px solid #6e6e6e;border-bottom:5px solid #6e6e6e;"></div>
<div style="left:3289px;top:1628px;width:3px;height:81px;background:#a0a0a0;"></div>
<div style="left:2962px;top:1706px;width:330px;height:3px;background:#a0a0a0;"></div>
<div style="top:1646.71px;font-size:47px;line-height:47px;height:47px;color:#000;white-space:pre;left:2993.79px;width:266.42px;transform:scaleX(0.9684);transform-origin:50% 0;">Refresh Grid</div>
<div style="left:3366px;top:1625px;width:306px;height:91px;background:#f0f0f0;border-top:3px solid #fff;border-left:3px solid #fff;border-right:5px solid #6e6e6e;border-bottom:5px solid #6e6e6e;"></div>
<div style="left:3664px;top:1628px;width:3px;height:83px;background:#a0a0a0;"></div>
<div style="left:3369px;top:1708px;width:298px;height:3px;background:#a0a0a0;"></div>
<div style="top:1646.71px;font-size:47px;line-height:47px;height:47px;color:#000;white-space:pre;left:3487.97px;width:60.06px;transform:scaleX(0.9990);transform-origin:50% 0;">Ok</div>
</body></html>
